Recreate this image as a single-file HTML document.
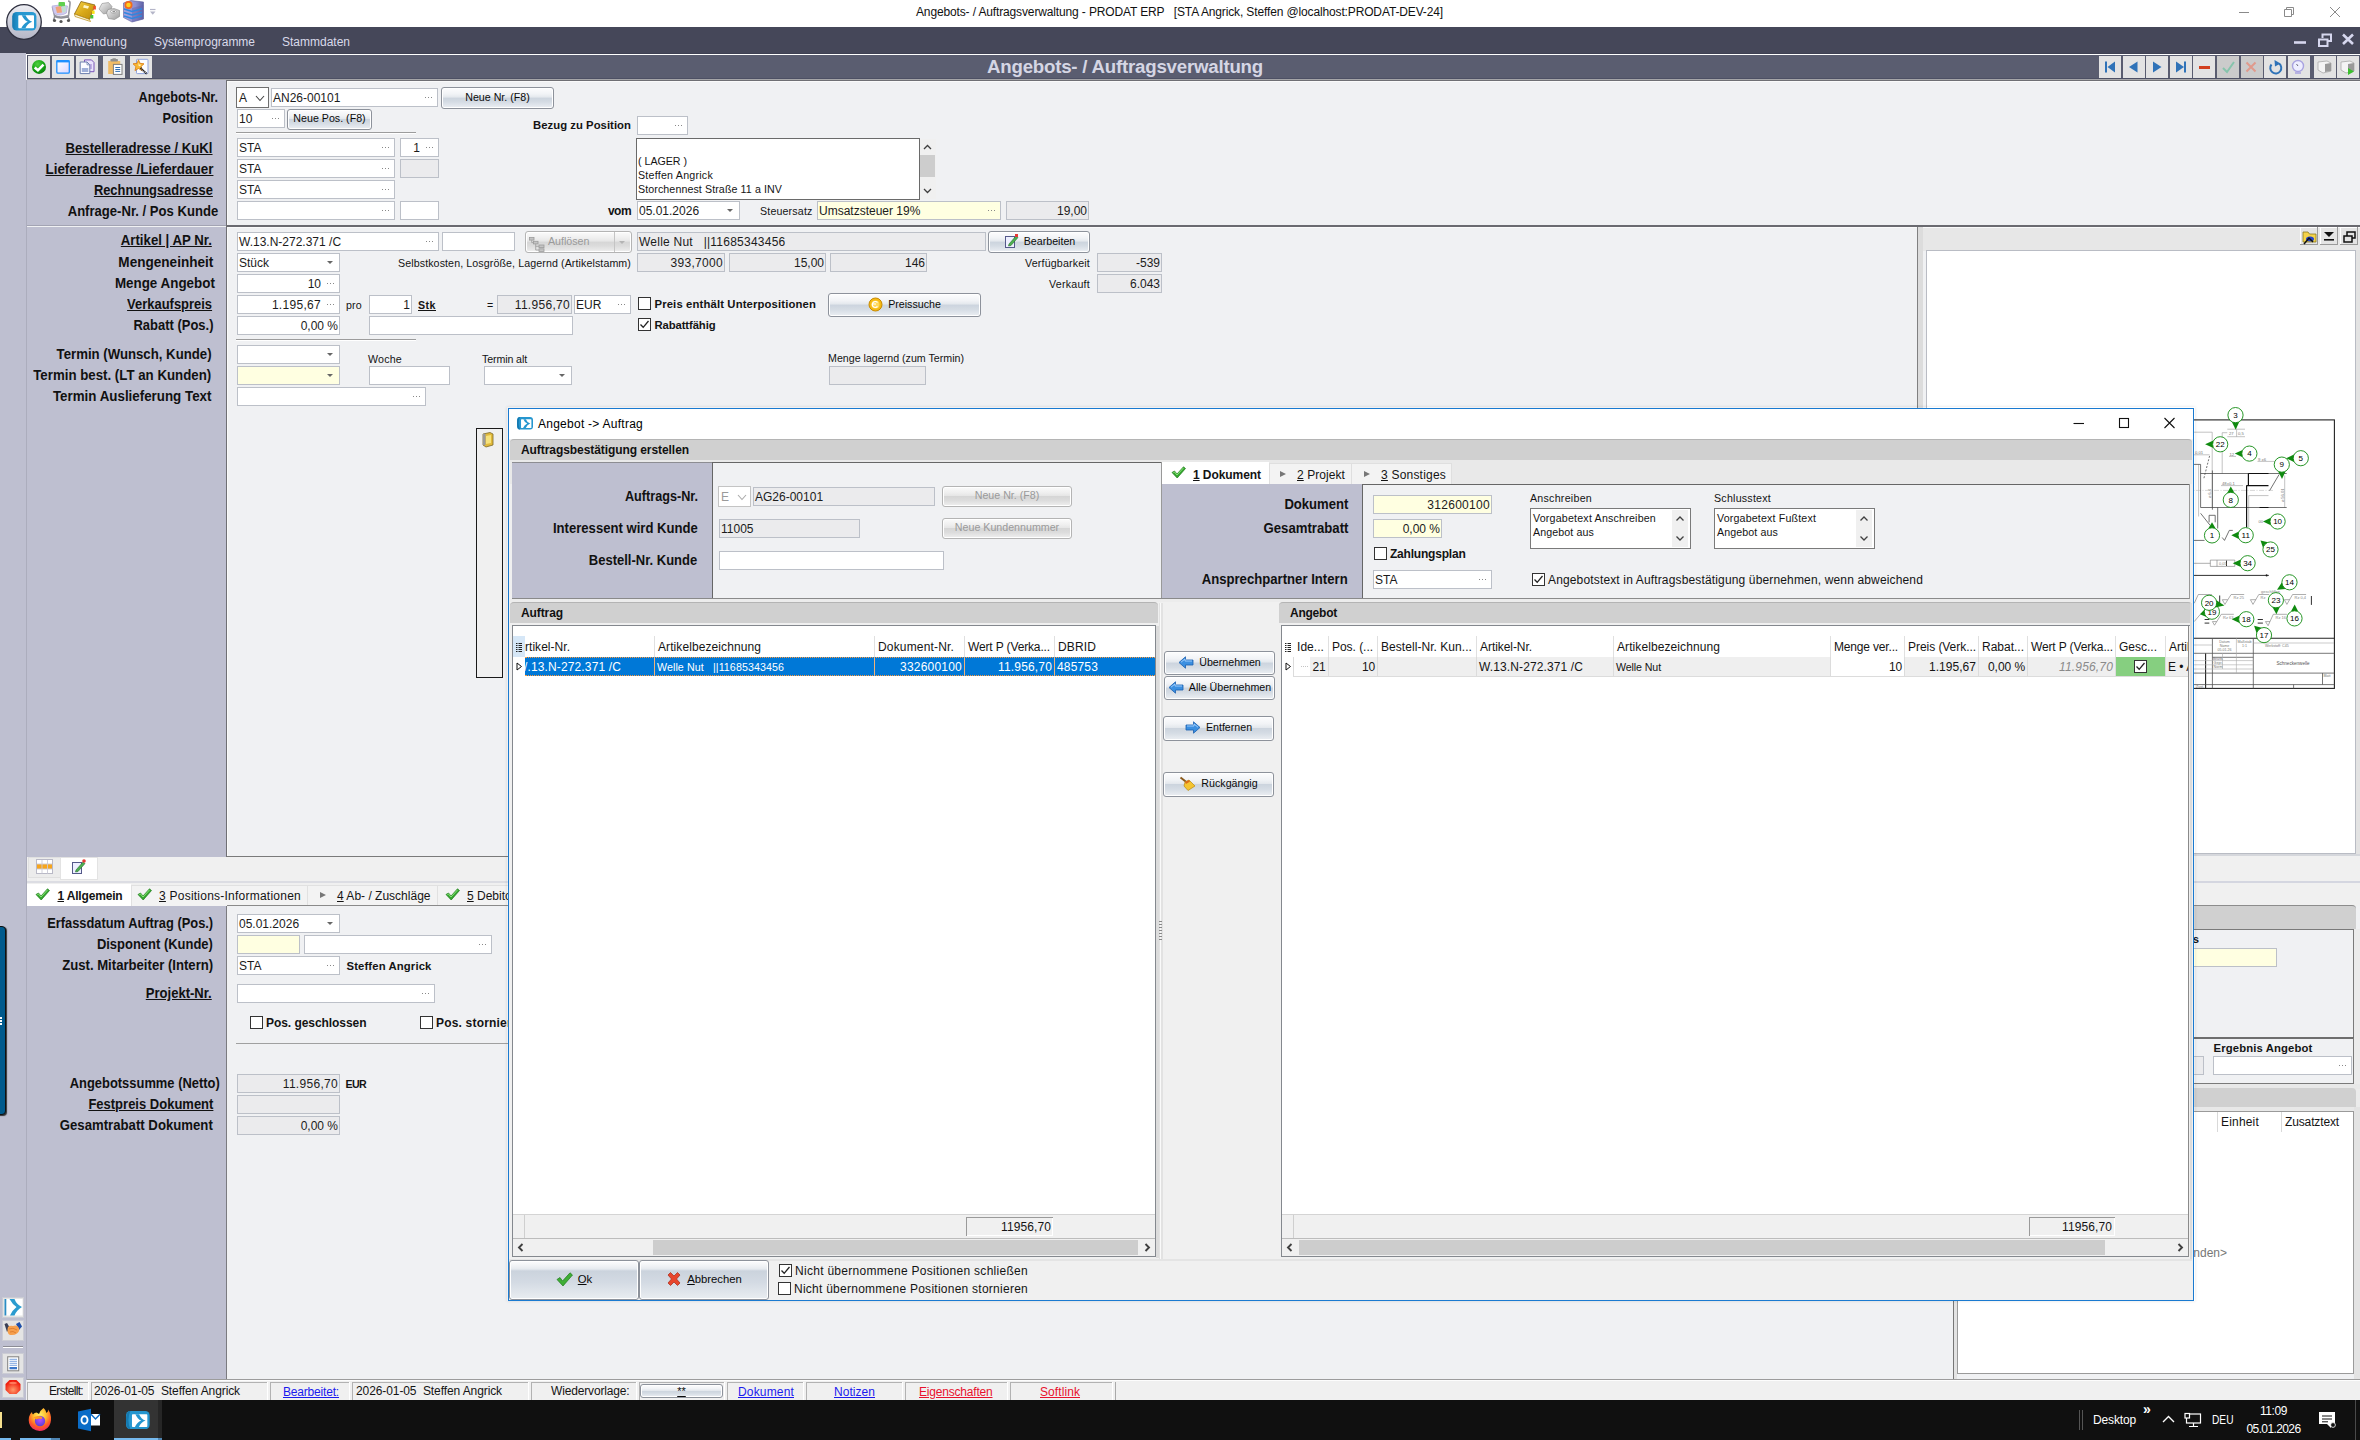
<!DOCTYPE html>
<html lang="de"><head><meta charset="utf-8"><title>Angebots- / Auftragsverwaltung - PRODAT ERP</title>
<style>
*{box-sizing:content-box;margin:0;padding:0}
html,body{width:2360px;height:1440px;overflow:hidden;background:#f0f1f3;font-family:"Liberation Sans",sans-serif;font-size:12px;color:#141414}
.a{position:absolute;white-space:pre}
.t{display:block}
.f{overflow:hidden;color:#1b1b1b}
.d{position:absolute;width:8px;height:1px;background:repeating-linear-gradient(90deg,#888 0 1px,transparent 1px 3px)}
.ar{position:absolute;width:0;height:0;border-left:3.5px solid transparent;border-right:3.5px solid transparent;border-top:3.5px solid #666}
.b{border:1px solid #8d929b;border-radius:3px;text-align:center;color:#0a0a0a;background:linear-gradient(#fdfdfe 0%,#f1f3f6 30%,#e4e8ed 46%,#ccd4de 50%,#d5dce4 70%,#eceff3 100%);box-shadow:inset 0 0 0 1px #fff}
.b.bd{color:#9a9a9a;background:linear-gradient(#fbfbfb 0%,#efefef 30%,#e6e6e6 46%,#d6d6d6 50%,#dcdcdc 70%,#efefef 100%);border-color:#b4b4b4}
.b.bg{background:linear-gradient(#fdfdfe 0,#f0f2f5 5px,#e6eaef 8px,#cbd3dd 10px,#d3dae3 55%,#e9edf1 100%)}
.b svg{vertical-align:middle;margin-right:5px;position:relative;top:-1px}
.tb{position:absolute;background:#e4e4e4}
u{text-decoration:underline}
</style></head>
<body>
<div class="a" style="left:0px;top:0px;width:2360px;height:27px;background:#fff;"></div>
<div class="a" style="left:0px;top:27px;width:2360px;height:27px;background:#454759;"></div>
<div class="a" style="left:0px;top:53px;width:2360px;height:1px;background:#3f4153;"></div>
<div class="a" style="left:0px;top:53px;width:26px;height:1347px;background:#bebfd0;"></div>
<div class="a" style="left:26px;top:80px;width:1px;height:1300px;background:#acadbd;"></div>
<div class="a" style="left:26px;top:54px;width:2334px;height:1px;background:#fff;"></div>
<div class="a" style="left:26px;top:54px;width:1px;height:25px;background:#fff;"></div>
<div class="a" style="left:27px;top:55px;width:2333px;height:24px;background:#5a5d70;"></div>
<div class="a" style="left:27px;top:55px;width:1px;height:24px;background:#4d5064;"></div>
<div class="a" style="left:27px;top:78px;width:2333px;height:1px;background:#4d5064;"></div>
<div class="a" style="left:27px;top:79px;width:2333px;height:1px;background:#a5a5a8;"></div>
<span class="a t" id="t1" style="top:4px;line-height:16px;font-size:12px;left:1179.5px;transform:translateX(-50%);color:#111;letter-spacing:-0.137px;">Angebots- / Auftragsverwaltung - PRODAT ERP   [STA Angrick, Steffen @localhost:PRODAT-DEV-24]</span>
<svg class="a" style="left:2230px;top:0" width="130" height="27" viewBox="0 0 130 27" fill="none" stroke="#8a8a8a" stroke-width="1"><path d="M9 12.5 H19"/><path d="M54.5 9.5 h7 v7 h-7 z"/><path d="M56.5 9.5 v-2 h7 v7 h-2"/><path d="M100 7 L110 17 M110 7 L100 17"/></svg>
<svg class="a" style="left:4px;top:2px" width="42" height="42" viewBox="4 2 42 42"><defs><linearGradient id="og" x1="0" y1="0" x2="0" y2="1"><stop offset="0" stop-color="#eeeff4"/><stop offset="0.5" stop-color="#cfd0dc"/><stop offset="1" stop-color="#b4b6c6"/></linearGradient><linearGradient id="ib" x1="0" y1="0" x2="1" y2="0"><stop offset="0" stop-color="#1579b0"/><stop offset="0.25" stop-color="#2596cf"/><stop offset="1" stop-color="#2a9bd3"/></linearGradient></defs><circle cx="24" cy="22" r="17.300" fill="url(#og)" stroke="#2f3140" stroke-width="1.300"/><rect x="12.200" y="12" width="24.200" height="18.500" rx="4.500" fill="url(#ib)"/><rect x="18.300" y="15.200" width="15.700" height="13" rx="0.800" fill="#fff"/><path d="M21.800 15.200 H25.600 Q27.500 20 32.200 21.700 Q27.500 23.400 25.400 28.200 H21.300 Q23.600 23.400 27.700 21.700 Q23.800 20 21.800 15.200 Z" fill="#2596cf"/></svg>
<svg class="a" style="left:50px;top:0" width="110" height="26" viewBox="50 0 110 26"><defs><linearGradient id="gd" x1="0" y1="0" x2="1" y2="1"><stop offset="0" stop-color="#f5d34a"/><stop offset="0.5" stop-color="#d9a91a"/><stop offset="1" stop-color="#b98a0c"/></linearGradient><linearGradient id="nt" x1="0" y1="0" x2="1" y2="1"><stop offset="0" stop-color="#f2f2f2"/><stop offset="1" stop-color="#9c9c9c"/></linearGradient><linearGradient id="sv" x1="0" y1="0" x2="1" y2="0"><stop offset="0" stop-color="#a9a4dc"/><stop offset="0.6" stop-color="#8d8fd0"/><stop offset="1" stop-color="#5f62a6"/></linearGradient></defs><path d="M68 1 Q70.500 1 70 4 L68.500 15.500 Q60 18.500 54.500 15.500 L52.500 7" fill="none" stroke="#9a9aa2" stroke-width="1.700"/><path d="M52 6 Q60 4 67.500 6 L66.500 13 Q60 17 54 13.500 Z" fill="#cfc9ef" stroke="#a9a3d6" stroke-width="0.600"/><rect x="58.500" y="2" width="6.500" height="4.500" rx="1" fill="#5fd04f"/><path d="M55.500 7 L61 6 L62 12.500 L57 13 Z" fill="#f0a27a"/><path d="M62 6.500 L66 6 L65.500 12 L62.500 12.500 Z" fill="#bfe0cf"/><path d="M54 16 Q60 19.500 69 16.500 M55 16 L53.500 20 M68 16.500 L69.500 20" stroke="#8e8e96" stroke-width="1.500" fill="none"/><circle cx="54.500" cy="20.500" r="1.600" fill="#555"/><circle cx="61" cy="21.500" r="1.600" fill="#555"/><circle cx="68.500" cy="20.500" r="1.600" fill="#555"/><path d="M74.500 14 L81 1.500 L95 5 L89.500 19.500 Z" fill="url(#gd)" stroke="#8a6510" stroke-width="0.800"/><path d="M74.500 14 L89.500 19.500 L90.500 21.500 L75 16.500 Z" fill="#fbf6e0" stroke="#b98a0c" stroke-width="0.700"/><path d="M84 5 L89 6.200 L88 8.700 L83 7.500 Z" fill="#fff6c8"/><rect x="93.300" y="6" width="2.600" height="3.500" fill="#f0522c"/><rect x="92" y="10.600" width="2.600" height="3.300" fill="#f7e017"/><rect x="90.500" y="15" width="2.800" height="3.500" fill="#44c436"/><path d="M99 9 L102 3.500 L108.500 2.500 L112 6.500 L110 12.500 L103.500 14 Z" fill="url(#nt)" stroke="#8c8c8c" stroke-width="0.600"/><path d="M106.500 13 L108 9.500 L114 8.500 L119.500 10.500 L119.500 16.500 L114.500 19.500 L108.500 18.500 Z" fill="url(#nt)" stroke="#858585" stroke-width="0.600"/><ellipse cx="113.500" cy="11.500" rx="3" ry="1.600" fill="#f6f6f6" stroke="#8a8a8a" stroke-width="0.600"/><ellipse cx="113.800" cy="11.600" rx="1.500" ry="0.800" fill="#8f8f8f"/><path d="M123.500 3 L131 0.500 L143.500 2 L143.500 19 L132 22 L123.500 17.500 Z" fill="url(#sv)" stroke="#5a5c9c" stroke-width="0.600"/><path d="M132 8 L143.500 5 L143.500 19 L132 22 Z" fill="#5f62a6" opacity="0.450"/><path d="M124 9 L132 11.500 L142 8.800 M124 12.500 L132 15 L142 12.300 M124 16 L132 18.500 L142 15.800" stroke="#2f86e0" stroke-width="1.500" fill="none"/><circle cx="128.500" cy="5" r="4" fill="#f26a1f"/><circle cx="128.500" cy="5" r="2.300" fill="#ffd21f"/><path d="M150 9.500 H155.500" stroke="#b4b5c8" stroke-width="1.200"/><path d="M150 11.500 L155.500 11.500 L152.750 14.800 Z" fill="#b4b5c8"/></svg>
<span class="a t" id="t2" style="top:34px;line-height:16px;font-size:12px;left:62px;color:#d9daea;letter-spacing:0.179px;">Anwendung</span>
<span class="a t" id="t3" style="top:34px;line-height:16px;font-size:12px;left:154px;color:#d9daea;letter-spacing:-0.025px;">Systemprogramme</span>
<span class="a t" id="t4" style="top:34px;line-height:16px;font-size:12px;left:282px;color:#d9daea;letter-spacing:-0.005px;">Stammdaten</span>
<svg class="a" style="left:2290px;top:30px" width="70" height="22" viewBox="0 0 70 22" fill="none" stroke="#d6d7ee" stroke-width="2"><path d="M4 12.5 H16" stroke-width="2.6"/><path d="M29 9.5 h8.5 v6.5 h-8.5 z"/><path d="M32.5 8 V4.5 h8.500 v6.500 H38" /><path d="M53 4.5 L63 14 M63 4.5 L53 14" stroke-width="2.6"/></svg>
<div class="tb" style="left:28px;top:56px;width:22px;height:22px"></div>
<div class="tb" style="left:52px;top:56px;width:22px;height:22px"></div>
<div class="tb" style="left:76px;top:56px;width:22px;height:22px"></div>
<div class="tb" style="left:103px;top:56px;width:22px;height:22px"></div>
<div class="tb" style="left:130px;top:56px;width:22px;height:22px"></div>
<svg class="a" style="left:28px;top:56px" width="126" height="22" viewBox="0 0 126 22"><defs><radialGradient id="gc" cx="0.4" cy="0.3" r="0.8"><stop offset="0" stop-color="#4fd03f"/><stop offset="0.6" stop-color="#12a012"/><stop offset="1" stop-color="#0a7a0a"/></radialGradient><linearGradient id="wg" x1="0" y1="0" x2="1" y2="1"><stop offset="0" stop-color="#ffffff"/><stop offset="1" stop-color="#d9d6ff"/></linearGradient></defs><circle cx="11" cy="10.900" r="7" fill="url(#gc)"/><path d="M6.700 11.500 L9.900 14.300 L15.500 8.600" stroke="#fff" stroke-width="2.600" fill="none"/><rect x="28.800" y="4.600" width="12.500" height="12.600" rx="1.200" fill="url(#wg)" stroke="#1e90ff" stroke-width="1.300"/><path d="M28.500 5.300 H41.500" stroke="#1e90ff" stroke-width="2.200"/><path d="M56.500 3.900 H63.500 L66 6.500 V15.700 H56.500 Z" fill="#e9e2fb" stroke="#7b55b8" stroke-width="1"/><path d="M63 8 V13" stroke="#a98bd6" stroke-width="1.200"/><path d="M52.200 6 H59 L61.800 8.800 V17.600 H52.200 Z" fill="#fbfcff" stroke="#6c7fae" stroke-width="1"/><path d="M59 6 V8.800 H61.800" fill="none" stroke="#6c7fae" stroke-width="0.800"/><rect x="53.800" y="12" width="6.500" height="4" fill="#9fb0d8"/><rect x="80.200" y="5" width="12" height="13" fill="#f0bc66"/><rect x="82.400" y="3" width="7.500" height="2.600" rx="0.800" fill="#8e8e8e"/><rect x="84.500" y="2.300" width="3.300" height="1.500" fill="#8e8e8e"/><rect x="85.400" y="8.400" width="8.600" height="10" fill="#fff" stroke="#7d7d7d" stroke-width="1"/><path d="M87.300 11.500 H92.200 M87.300 13.500 H92.200 M87.300 15.400 H92.200" stroke="#2f6fb5" stroke-width="1"/><rect x="108.500" y="3.300" width="11.500" height="14.300" rx="0.800" fill="#fbfcff" stroke="#8fa3dc" stroke-width="1"/><path d="M110.500 3.800 L112 7.300 L116 7.800 L113.100 10.500 L114 14.600 L110.500 12.500 L107 14.600 L107.900 10.500 L105 7.800 L109 7.300 Z" fill="#f7b733" stroke="#d97a12" stroke-width="0.800"/><path d="M110.500 6.500 L111.300 8.500 L113.300 8.800 L111.800 10.200 L110.500 9.800 Z" fill="#fff3c2"/><path d="M112.500 12 L118.800 17.900" stroke="#222" stroke-width="2" stroke-dasharray="1.200 0.500"/></svg>
<span class="a t" id="t5" style="top:54.5px;line-height:24px;font-size:18.67px;left:1125px;transform:translateX(-50%);font-weight:bold;color:#d5d6e4;letter-spacing:-0.209px;">Angebots- / Auftragsverwaltung</span>
<div class="tb" style="left:2099px;top:56px;width:22px;height:22px;background:#e3e3e3"></div>
<div class="tb" style="left:2123px;top:56px;width:22px;height:22px;background:#e3e3e3"></div>
<div class="tb" style="left:2146px;top:56px;width:22px;height:22px;background:#e3e3e3"></div>
<div class="tb" style="left:2170px;top:56px;width:22px;height:22px;background:#e3e3e3"></div>
<div class="tb" style="left:2193px;top:56px;width:22px;height:22px;background:#e3e3e3"></div>
<div class="tb" style="left:2217px;top:56px;width:22px;height:22px;background:#cbcbcb"></div>
<div class="tb" style="left:2241px;top:56px;width:22px;height:22px;background:#cbcbcb"></div>
<div class="tb" style="left:2264px;top:56px;width:22px;height:22px;background:#e3e3e3"></div>
<div class="tb" style="left:2288px;top:56px;width:22px;height:22px;background:#e3e3e3"></div>
<div class="tb" style="left:2314px;top:56px;width:22px;height:22px;background:#e3e3e3"></div>
<div class="tb" style="left:2337px;top:56px;width:22px;height:22px;background:#e3e3e3"></div>
<svg class="a" style="left:2099px;top:56px" width="262" height="22" viewBox="0 0 262 22"><g fill="#2f73b8"><rect x="6" y="5.500" width="2" height="11"/><path d="M16 5.5 V16.5 L8.500 11 Z"/><path d="M38.500 5.500 V16.500 L30 11 Z"/><path d="M54 5.500 V16.500 L62.500 11 Z"/><path d="M77 5.500 V16.500 L85 11 Z"/><rect x="85" y="5.500" width="2" height="11"/></g><rect x="100" y="10" width="11" height="3" fill="#d2401f"/><path d="M124 12 L128 16 L135 6" fill="none" stroke="#86c4ac" stroke-width="2"/><path d="M147.500 6.500 L156.500 15.500 M156.500 6.500 L147.500 15.500" stroke="#e09a8c" stroke-width="2"/><path d="M180 7.500 A5.500 5.500 0 1 1 172.500 8.500" fill="none" stroke="#2f73b8" stroke-width="2"/><path d="M175.500 4 L181.500 7.500 L176 10.500 Z" fill="#2f73b8"/><circle cx="199" cy="10" r="5.500" fill="#eef" stroke="#a9a3e0" stroke-width="1.4"/><path d="M199 10 L197.500 8" stroke="#667" stroke-width="1"/><path d="M196 17 H202" stroke="#a9a3e0" stroke-width="1.500"/><path d="M219 6 L228 5 L232 7 L232 15 L224 17 L219 14 Z" fill="#f4f4f4" stroke="#aaa" stroke-width="0.8"/><path d="M226 8 L232 7 L232 15 L226 16 Z" fill="#9a9a9a"/><path d="M242 6 L251 5 L255 7 L255 15 L247 17 L242 14 Z" fill="#f4f4f4" stroke="#aaa" stroke-width="0.8"/><path d="M249 8 L255 7 L255 15 L249 16 Z" fill="#9a9a9a"/><path d="M249 12 L255 15.500 L249 19 Z" fill="#3bbf2d"/></svg>
<div class="a" style="left:27px;top:80px;width:200px;height:145px;background:#bebfd0;"></div>
<div class="a" style="left:227px;top:80px;width:2133px;height:145px;background:#f0f1f3;"></div>
<div class="a" style="left:226px;top:80px;width:1px;height:145px;background:#6f6f74;"></div>
<div class="a" style="left:227px;top:81px;width:1px;height:144px;background:#fafafa;"></div>
<div class="a" style="left:227px;top:80px;width:2133px;height:1px;background:#6f6f74;"></div>
<div class="a" style="left:228px;top:81px;width:2132px;height:1px;background:#fafafa;"></div>
<div class="a" style="left:27px;top:225px;width:200px;height:1px;background:#a3a4b3;"></div>
<div class="a" style="left:27px;top:227px;width:200px;height:630px;background:#bebfd0;"></div>
<div class="a" style="left:227px;top:227px;width:1690px;height:630px;background:#f0f1f3;"></div>
<div class="a" style="left:226px;top:225px;width:1px;height:632px;background:#6f6f74;"></div>
<div class="a" style="left:227px;top:227px;width:1px;height:629px;background:#fafafa;"></div>
<div class="a" style="left:227px;top:225px;width:2133px;height:2px;background:#6a6a70;"></div>
<div class="a" style="left:228px;top:227px;width:1689px;height:1px;background:#fafafa;"></div>
<div class="a" style="left:227px;top:856px;width:1690px;height:1px;background:#7a7a7a;"></div>
<span class="a t" id="t6" style="top:88px;line-height:18px;font-size:14.2px;right:2141.5px;font-weight:bold;color:#111;transform:scaleX(0.8925);transform-origin:right center;">Angebots-Nr.</span>
<span class="a t" id="t7" style="top:109px;line-height:18px;font-size:14.2px;right:2147.5px;font-weight:bold;color:#111;transform:scaleX(0.9023);transform-origin:right center;">Position</span>
<span class="a t" id="t8" style="top:139px;line-height:18px;font-size:14.2px;right:2147px;font-weight:bold;color:#111;text-decoration:underline;transform:scaleX(0.9274);transform-origin:right center;">Bestelleradresse / KuKl</span>
<span class="a t" id="t9" style="top:159.5px;line-height:18px;font-size:14.2px;right:2147px;font-weight:bold;color:#111;text-decoration:underline;transform:scaleX(0.9468);transform-origin:right center;">Lieferadresse /Lieferdauer</span>
<span class="a t" id="t10" style="top:180.5px;line-height:18px;font-size:14.2px;right:2147px;font-weight:bold;color:#111;text-decoration:underline;transform:scaleX(0.9092);transform-origin:right center;">Rechnungsadresse</span>
<span class="a t" id="t11" style="top:201.5px;line-height:18px;font-size:14.2px;right:2141.5px;font-weight:bold;color:#111;transform:scaleX(0.9223);transform-origin:right center;">Anfrage-Nr. / Pos Kunde</span>
<div class="a f" style="left:236px;top:87px;width:31px;height:19px;background:#fff;border:1px solid #6f6f6f;line-height:19px;font-size:12px;"><span class="a" style="left:2px;top:1px;">A</span></div>
<svg class="a" style="left:255px;top:94.500px" width="10" height="7" viewBox="0 0 10 7"><path d="M1 1 L5 5.500 L9 1" fill="none" stroke="#444" stroke-width="1.1"/></svg>
<div class="a f" style="left:271px;top:88px;width:165px;height:17px;background:#fff;border:1px solid #bcc0c8;line-height:17px;font-size:12px;"><span class="a" style="left:1px;top:1px;">AN26-00101</span><i class="d" style="right:4px;top:8px"></i></div>
<div class="a b" style="left:441px;top:87px;width:111px;height:20px;line-height:18px;font-size:10.67px;"><span>Neue Nr. (F8)</span></div>
<div class="a f" style="left:237px;top:109px;width:46px;height:17px;background:#fff;border:1px solid #bcc0c8;line-height:17px;font-size:12px;"><span class="a" style="left:1px;top:1px;">10</span><i class="d" style="right:4px;top:8px"></i></div>
<div class="a b" style="left:287px;top:109px;width:83px;height:19px;line-height:17px;font-size:10.67px;"><span>Neue Pos. (F8)</span></div>
<div class="a" style="left:236px;top:132px;width:180px;height:1px;background:#9c9c9c;"></div>
<div class="a" style="left:236px;top:133px;width:180px;height:1px;background:#fff;"></div>
<div class="a f" style="left:237px;top:138px;width:156px;height:17px;background:#fff;border:1px solid #bcc0c8;line-height:17px;font-size:12px;"><span class="a" style="left:1px;top:1px;">STA</span><i class="d" style="right:4px;top:8px"></i></div>
<div class="a f" style="left:400px;top:138px;width:37px;height:17px;background:#fff;border:1px solid #bcc0c8;line-height:17px;font-size:12px;"><span class="a" style="right:18px;top:1px;">1</span><i class="d" style="right:4px;top:8px"></i></div>
<div class="a f" style="left:237px;top:159px;width:156px;height:17px;background:#fff;border:1px solid #bcc0c8;line-height:17px;font-size:12px;"><span class="a" style="left:1px;top:1px;">STA</span><i class="d" style="right:4px;top:8px"></i></div>
<div class="a f" style="left:400px;top:159px;width:37px;height:17px;background:#ebebed;border:1px solid #bcc0c8;line-height:17px;font-size:12px;"></div>
<div class="a f" style="left:237px;top:180px;width:156px;height:17px;background:#fff;border:1px solid #bcc0c8;line-height:17px;font-size:12px;"><span class="a" style="left:1px;top:1px;">STA</span><i class="d" style="right:4px;top:8px"></i></div>
<div class="a f" style="left:237px;top:201px;width:156px;height:17px;background:#fff;border:1px solid #bcc0c8;line-height:17px;font-size:12px;"><i class="d" style="right:4px;top:8px"></i></div>
<div class="a f" style="left:400px;top:201px;width:37px;height:17px;background:#fff;border:1px solid #bcc0c8;line-height:17px;font-size:12px;"></div>
<span class="a t" id="t12" style="top:117px;line-height:16px;font-size:11.3px;right:1729px;font-weight:bold;letter-spacing:0.042px;">Bezug zu Position</span>
<div class="a f" style="left:637px;top:116px;width:49px;height:17px;background:#fff;border:1px solid #bcc0c8;line-height:17px;font-size:12px;"><i class="d" style="right:4px;top:8px"></i></div>
<div class="a" style="left:636px;top:138px;width:282px;height:60px;background:#fff;border:1px solid #6a6a6a;"></div>
<span class="a t" id="t13" style="top:153px;line-height:16px;font-size:10.67px;left:638px;letter-spacing:-0.017px;">( LAGER )</span>
<span class="a t" id="t14" style="top:167px;line-height:16px;font-size:10.67px;left:638px;letter-spacing:0.234px;">Steffen Angrick</span>
<span class="a t" id="t15" style="top:181px;line-height:16px;font-size:10.67px;left:638px;letter-spacing:0.094px;">Storchennest Straße 11 a INV</span>
<div class="a" style="left:920px;top:139px;width:16px;height:60px;background:#f0f0f0;"></div>
<div class="a" style="left:920px;top:155px;width:15px;height:22px;background:#cdcdcd;"></div>
<svg class="a" style="left:920px;top:139px" width="16" height="60" viewBox="0 0 16 60" fill="none" stroke="#404040" stroke-width="1.3"><path d="M4 10 L7.500 6.500 L11 10"/><path d="M4 50 L7.500 53.500 L11 50"/></svg>
<span class="a t" id="t16" style="top:203px;line-height:16px;font-size:12px;right:1729px;font-weight:bold;letter-spacing:-0.562px;">vom</span>
<div class="a f" style="left:637px;top:201px;width:101px;height:17px;background:#fff;border:1px solid #bcc0c8;line-height:17px;font-size:12px;"><span class="a" style="left:1px;top:1px;">05.01.2026</span><i class="ar" style="right:6px;top:7px"></i></div>
<span class="a t" id="t17" style="top:203px;line-height:16px;font-size:10.67px;left:760px;letter-spacing:0.155px;">Steuersatz</span>
<div class="a f" style="left:817px;top:201px;width:182px;height:17px;background:#ffffe1;border:1px solid #bcc0c8;line-height:17px;font-size:12px;"><span class="a" style="left:1px;top:1px;">Umsatzsteuer 19%</span><i class="d" style="right:4px;top:8px"></i></div>
<div class="a f" style="left:1006px;top:201px;width:81px;height:17px;background:#ebebed;border:1px solid #bcc0c8;line-height:17px;font-size:12px;"><span class="a" style="right:1px;top:1px;">19,00</span></div>
<span class="a t" id="t18" style="top:231px;line-height:18px;font-size:14.2px;right:2148px;font-weight:bold;color:#111;text-decoration:underline;transform:scaleX(0.9304);transform-origin:right center;">Artikel | AP Nr.</span>
<span class="a t" id="t19" style="top:253px;line-height:18px;font-size:14.2px;right:2147px;font-weight:bold;color:#111;transform:scaleX(0.9564);transform-origin:right center;">Mengeneinheit</span>
<span class="a t" id="t20" style="top:274px;line-height:18px;font-size:14.2px;right:2145px;font-weight:bold;color:#111;transform:scaleX(0.9445);transform-origin:right center;">Menge Angebot</span>
<span class="a t" id="t21" style="top:294.5px;line-height:18px;font-size:14.2px;right:2148px;font-weight:bold;color:#111;text-decoration:underline;transform:scaleX(0.9132);transform-origin:right center;">Verkaufspreis</span>
<span class="a t" id="t22" style="top:316px;line-height:18px;font-size:14.2px;right:2147px;font-weight:bold;color:#111;transform:scaleX(0.9143);transform-origin:right center;">Rabatt (Pos.)</span>
<span class="a t" id="t23" style="top:345px;line-height:18px;font-size:14.2px;right:2148px;font-weight:bold;color:#111;transform:scaleX(0.9305);transform-origin:right center;">Termin (Wunsch, Kunde)</span>
<span class="a t" id="t24" style="top:366px;line-height:18px;font-size:14.2px;right:2149px;font-weight:bold;color:#111;transform:scaleX(0.9358);transform-origin:right center;">Termin best. (LT an Kunden)</span>
<span class="a t" id="t25" style="top:387px;line-height:18px;font-size:14.2px;right:2149px;font-weight:bold;color:#111;transform:scaleX(0.9410);transform-origin:right center;">Termin Auslieferung Text</span>
<div class="a f" style="left:237px;top:232px;width:200px;height:17px;background:#fff;border:1px solid #bcc0c8;line-height:17px;font-size:12px;"><span class="a" style="left:1px;top:1px;">W.13.N-272.371 /C</span><i class="d" style="right:4px;top:8px"></i></div>
<div class="a f" style="left:442px;top:232px;width:71px;height:17px;background:#fff;border:1px solid #bcc0c8;line-height:17px;font-size:12px;"></div>
<div class="a b bd" style="left:525px;top:231px;width:105px;height:20px;line-height:18px;font-size:10.67px;text-align:left"><svg class="a" style="left:3px;top:2px;margin:0" width="17" height="15" viewBox="0 0 17 15" fill="#c4c4c4" stroke="#9c9c9c" stroke-width="0.800"><rect x="0.500" y="0.500" width="4.500" height="2.600"/><rect x="4.500" y="4.300" width="4.500" height="2.600"/><rect x="10" y="8" width="5" height="2.600"/><rect x="10" y="11.800" width="5" height="2.600"/><path d="M2.700 3.100 V5.600 H4.500 M6.700 6.900 V13 H10 M6.700 9.300 H10" fill="none"/></svg><span class="a" style="left:22px;top:0">Auflösen</span><i class="a" style="left:88px;top:0;width:1px;height:20px;background:#c4c4c4"></i><i class="ar" style="left:93px;top:9px;border-top-color:#b4b4b4"></i></div>
<div class="a f" style="left:637px;top:232px;width:347px;height:17px;background:#ebebed;border:1px solid #bcc0c8;line-height:17px;font-size:12px;"><span class="a" id="t26" style="left:1px;top:1px;letter-spacing:0.237px;">Welle Nut   ||11685343456</span></div>
<div class="a b" style="left:988px;top:231px;width:100px;height:20px;line-height:18px;font-size:10.67px;"><svg width="16" height="16" viewBox="0 0 16 16"><rect x="2.500" y="3.500" width="9" height="11" fill="#eef0ff" stroke="#55598a"/><path d="M6 11 L13 3 L15 4.500 L8 12.500 L5.500 13 Z" fill="#4caf50" stroke="#2c6e2f" stroke-width="0.6"/><rect x="12" y="1" width="3" height="3" fill="#e53935"/></svg><span>Bearbeiten</span></div>
<div class="a f" style="left:237px;top:253px;width:101px;height:17px;background:#fff;border:1px solid #bcc0c8;line-height:17px;font-size:12px;"><span class="a" style="left:1px;top:1px;">Stück</span><i class="ar" style="right:6px;top:7px"></i></div>
<span class="a t" id="t27" style="top:255px;line-height:16px;font-size:10.67px;right:1729px;letter-spacing:0.095px;">Selbstkosten, Losgröße, Lagernd (Artikelstamm)</span>
<div class="a f" style="left:637px;top:253px;width:86px;height:17px;background:#ebebed;border:1px solid #bcc0c8;line-height:17px;font-size:12px;"><span class="a" style="right:1px;top:1px;letter-spacing:0.300px;">393,7000</span></div>
<div class="a f" style="left:729px;top:253px;width:95px;height:17px;background:#ebebed;border:1px solid #bcc0c8;line-height:17px;font-size:12px;"><span class="a" style="right:1px;top:1px;">15,00</span></div>
<div class="a f" style="left:830px;top:253px;width:95px;height:17px;background:#ebebed;border:1px solid #bcc0c8;line-height:17px;font-size:12px;"><span class="a" style="right:1px;top:1px;">146</span></div>
<span class="a t" id="t28" style="top:255px;line-height:16px;font-size:10.67px;right:1270px;letter-spacing:0.169px;">Verfügbarkeit</span>
<div class="a f" style="left:1097px;top:253px;width:63px;height:17px;background:#ebebed;border:1px solid #bcc0c8;line-height:17px;font-size:12px;"><span class="a" style="right:1px;top:1px;">-539</span></div>
<span class="a t" id="t29" style="top:276px;line-height:16px;font-size:10.67px;right:1270px;letter-spacing:0.236px;">Verkauft</span>
<div class="a f" style="left:1097px;top:274px;width:63px;height:17px;background:#ebebed;border:1px solid #bcc0c8;line-height:17px;font-size:12px;"><span class="a" style="right:1px;top:1px;">6.043</span></div>
<div class="a f" style="left:237px;top:274px;width:101px;height:17px;background:#fff;border:1px solid #bcc0c8;line-height:17px;font-size:12px;"><span class="a" style="right:18px;top:1px;">10</span><i class="d" style="right:4px;top:8px"></i></div>
<div class="a f" style="left:237px;top:295px;width:101px;height:17px;background:#fff;border:1px solid #bcc0c8;line-height:17px;font-size:12px;"><span class="a" style="right:18px;top:1px;letter-spacing:0.300px;">1.195,67</span><i class="d" style="right:4px;top:8px"></i></div>
<span class="a t" id="t30" style="top:297px;line-height:16px;font-size:10.67px;left:346px;letter-spacing:0.198px;">pro</span>
<div class="a f" style="left:369px;top:295px;width:41px;height:17px;background:#fff;border:1px solid #bcc0c8;line-height:17px;font-size:12px;"><span class="a" style="right:1px;top:1px;">1</span></div>
<span class="a t" id="t31" style="top:297px;line-height:16px;font-size:10.67px;left:418px;font-weight:bold;text-decoration:underline;letter-spacing:0.469px;">Stk</span>
<span class="a t" id="t32" style="top:297px;line-height:16px;font-size:10.67px;left:487px;">=</span>
<div class="a f" style="left:497px;top:295px;width:73px;height:17px;background:#ebebed;border:1px solid #bcc0c8;line-height:17px;font-size:12px;"><span class="a" style="right:1px;top:1px;letter-spacing:0.300px;">11.956,70</span></div>
<div class="a f" style="left:574px;top:295px;width:55px;height:17px;background:#fff;border:1px solid #bcc0c8;line-height:17px;font-size:12px;"><span class="a" style="left:1px;top:1px;">EUR</span><i class="d" style="right:4px;top:8px"></i></div>
<div class="a" style="left:638px;top:297px;width:11px;height:11px;background:#fff;border:1px solid #333;"></div>
<span class="a t" id="t33" style="top:296px;line-height:16px;font-size:11.3px;left:654.5px;font-weight:bold;letter-spacing:0.136px;">Preis enthält Unterpositionen</span>
<div class="a b" style="left:828px;top:293px;width:151px;height:22px;line-height:20px;font-size:10.67px;"><svg width="15" height="15" viewBox="0 0 15 15"><circle cx="7.500" cy="7.500" r="6.500" fill="#f6b911" stroke="#c88a00"/><circle cx="7.500" cy="7.500" r="4" fill="#ffd95a"/><path d="M9.500 5.500 A3 3 0 1 0 9.500 9.500 M4.500 7 H8" stroke="#fff" stroke-width="1.2" fill="none"/></svg><span>Preissuche</span></div>
<div class="a f" style="left:237px;top:316px;width:101px;height:17px;background:#fff;border:1px solid #bcc0c8;line-height:17px;font-size:12px;"><span class="a" style="right:1px;top:1px;">0,00 %</span></div>
<div class="a f" style="left:369px;top:316px;width:202px;height:17px;background:#fff;border:1px solid #bcc0c8;line-height:17px;font-size:12px;"></div>
<div class="a" style="left:638px;top:318px;width:11px;height:11px;background:#fff;border:1px solid #333;"><svg class="a" style="left:0;top:0" width="11" height="11" viewBox="0 0 11 11"><path d="M1.5 5.5 L4.2 8.3 L9.5 2" fill="none" stroke="#222" stroke-width="1.3"/></svg></div>
<span class="a t" id="t34" style="top:316.5px;line-height:16px;font-size:11.3px;left:654.5px;font-weight:bold;letter-spacing:-0.104px;">Rabattfähig</span>
<div class="a" style="left:236px;top:339px;width:180px;height:1px;background:#9c9c9c;"></div>
<div class="a" style="left:236px;top:340px;width:180px;height:1px;background:#fff;"></div>
<div class="a f" style="left:237px;top:345px;width:101px;height:17px;background:#fff;border:1px solid #bcc0c8;line-height:17px;font-size:12px;"><i class="ar" style="right:6px;top:7px"></i></div>
<div class="a f" style="left:237px;top:366px;width:101px;height:17px;background:#ffffe1;border:1px solid #bcc0c8;line-height:17px;font-size:12px;"><i class="ar" style="right:6px;top:7px"></i></div>
<span class="a t" id="t35" style="top:351px;line-height:16px;font-size:10.67px;left:368px;letter-spacing:0.203px;">Woche</span>
<div class="a f" style="left:369px;top:366px;width:79px;height:17px;background:#fff;border:1px solid #bcc0c8;line-height:17px;font-size:12px;"></div>
<span class="a t" id="t36" style="top:351px;line-height:16px;font-size:10.67px;left:482px;letter-spacing:-0.120px;">Termin alt</span>
<div class="a f" style="left:484px;top:366px;width:86px;height:17px;background:#fff;border:1px solid #bcc0c8;line-height:17px;font-size:12px;"><i class="ar" style="right:6px;top:7px"></i></div>
<span class="a t" id="t37" style="top:350px;line-height:16px;font-size:10.67px;left:828px;letter-spacing:-0.001px;">Menge lagernd (zum Termin)</span>
<div class="a f" style="left:829px;top:366px;width:95px;height:17px;background:#ebebed;border:1px solid #bcc0c8;line-height:17px;font-size:12px;"></div>
<div class="a f" style="left:237px;top:387px;width:187px;height:17px;background:#fff;border:1px solid #bcc0c8;line-height:17px;font-size:12px;"><i class="d" style="right:4px;top:8px"></i></div>
<div class="a" style="left:476px;top:428px;width:25px;height:248px;background:#f0f0f0;border:1px solid #1a1a1a;"></div>
<svg class="a" style="left:481px;top:431px" width="14" height="18" viewBox="0 0 14 18"><path d="M2 3 L9 1.500 L12 3 L12 14 L5 16 L2 14 Z" fill="#e1b93a" stroke="#7b6a2a" stroke-width="0.8"/><path d="M5 5 L10 4 L10 12 L5 13 Z" fill="#f6e27a"/><rect x="2" y="3" width="2.500" height="11" fill="#9a9a9a"/></svg>
<div class="a" style="left:1917px;top:227px;width:1px;height:630px;background:#808080;"></div>
<div class="a" style="left:1918px;top:227px;width:5px;height:630px;background:#dcdcdc;"></div>
<div class="a" style="left:1923px;top:227px;width:437px;height:24px;background:#e7e7e7;"></div>
<div class="a" style="left:1923px;top:227px;width:437px;height:1px;background:#fafafa;"></div>
<div class="a" style="left:1926px;top:250px;width:428px;height:602px;background:#fff;border:1px solid #b9bcc4;"></div>
<div class="a" style="left:2356px;top:250px;width:4px;height:604px;background:#e3e3e3;"></div>
<div class="tb" style="left:2300px;top:227px;width:18px;height:18px;box-shadow:inset -1px -1px 0 #9a9a9a, inset 1px 1px 0 #fff"></div>
<div class="tb" style="left:2320px;top:227px;width:18px;height:18px;box-shadow:inset -1px -1px 0 #9a9a9a, inset 1px 1px 0 #fff"></div>
<div class="tb" style="left:2340px;top:227px;width:18px;height:18px;box-shadow:inset -1px -1px 0 #9a9a9a, inset 1px 1px 0 #fff"></div>
<svg class="a" style="left:2300px;top:227px" width="60" height="19" viewBox="0 0 60 19"><path d="M3 5 H8 L9.500 7 H16 V15 H3 Z" fill="#f4d24a" stroke="#8a7a20" stroke-width="0.8"/><ellipse cx="10" cy="12" rx="4" ry="2.500" fill="#2244cc"/><path d="M4 17 L9 11 L13 15" stroke="#111" stroke-width="1.500" fill="none"/><path d="M24 5 H34 L29 10 Z" fill="#111"/><rect x="24" y="12" width="10" height="1.600" fill="#111"/><g fill="none" stroke="#111" stroke-width="1.500"><rect x="44" y="9" width="8" height="6"/><path d="M47 9 V5 H55 V11 H52"/></g></svg>
<svg class="a" style="left:2150px;top:400px" width="200" height="300" viewBox="2150 400 200 300" font-family="Liberation Sans, sans-serif"><g fill="none" stroke="#222" stroke-width="1.100"><rect x="2160" y="419.900" width="174.400" height="268.500"/><path d="M2160 638.200 H2334.400"/><path d="M2205.600 653.300 V688.400"/></g><g fill="none" stroke="#555" stroke-width="0.800"><path d="M2212.400 638.200 V688.400 M2253.300 638.200 V688.400 M2160 653.300 H2334.400 M2212.400 657.300 H2253.300 M2160 673.100 H2334.400 M2160 684.600 H2334.400 M2322.500 673.100 V684.600 M2293.600 684.600 V688.400"/></g><g fill="none" stroke="#aaa" stroke-width="0.600"><path d="M2236.400 638.200 V673.100 M2222.500 653.300 V669 M2160 660.600 H2253.300 M2160 664.800 H2253.300 M2160 669 H2253.300 M2160 645 H2212.400 M2253.300 643 H2334"/></g><g font-size="3.600" fill="#777" text-anchor="middle"><text x="2293" y="664.500" font-size="4.600" fill="#555">Schneckenwelle</text><text x="2224.500" y="643">Datum</text><text x="2224.500" y="646.800">Name</text><text x="2224.500" y="650.600">05.01.26</text><text x="2244.500" y="643">Maßstab</text><text x="2244.500" y="646.800">1:1</text><text x="2265" y="647" text-anchor="start">Werkstoff: C45</text><text x="2218" y="660">Bearb.</text><text x="2218" y="664.200">Gepr.</text><text x="2218" y="668.400">Norm</text><text x="2327" y="677">Blatt</text><text x="2200" y="688">Zust.</text></g><g fill="none" stroke="#9a9a9a" stroke-width="0.600"><path d="M2160 432.200 H2212.200 V507 M2222.200 432.700 V473.500 M2222.200 432.700 H2227.300 M2227.300 429.200 H2245 M2227.300 436.700 H2245 M2236.600 429.200 V436.700 M2160 454.800 H2209.600 M2229 456.400 H2236 M2257.500 461.400 H2279 M2198.600 464.400 V516.500 M2221 485.600 H2243 M2248.700 495.600 V527 M2248.700 495.600 H2268.500 M2284.700 475.500 V507.500"/><path d="M2160 490.400 H2273.500" stroke-dasharray="5 1.500 1 1.500" stroke="#bbb"/></g><g fill="none" stroke="#444" stroke-width="0.750"><path d="M2200.600 473.500 H2286.700 M2200.600 507.500 H2286.700 M2160 464.400 H2200.600 V507.500 M2212.400 470.500 V509.700 M2217.700 507.500 V528.500 M2209.100 522.300 V515.300 H2215.200 V522.300 M2200.600 513.300 L2210.100 525.300 M2279.100 474.500 L2269.600 490.600 M2160 540.400 H2204.500 M2222.200 537.500 L2224.500 540.400 L2229.300 530.400 H2232.800"/><path d="M2209.600 455.900 L2203.600 479.500" stroke-dasharray="2 1.500"/></g><g fill="none" stroke="#111" stroke-width="1.200"><path d="M2248.400 473.500 H2268.500 M2259.500 507.500 H2268.500 M2248.400 473.500 V485.600 M2246.400 485.600 H2268.500 M2246.600 485.600 V527.400"/></g><g font-size="4.200" fill="#777"><text x="2229" y="435">27</text><text x="2238" y="435">0,5</text><text x="2195" y="454">0,01</text><text x="2229.500" y="456">12</text><text x="2258" y="460.500">9 ±6</text><text x="2222" y="484.800">48±0,1</text><text x="2258.500" y="523">00</text><text x="2211" y="498" transform="rotate(-90 2211 498)">⌀ 6,4</text><text x="2284" y="502" transform="rotate(-90 2284 502)">⌀ 56,01</text></g><g fill="none" stroke="#1a1a1a" stroke-width="0.900"><path d="M2160 575.400 H2267 M2219.700 595.500 V605.400 M2311.400 596 V604.900 M2204.600 619.500 H2209.300 M2204.600 623.100 H2209.300 M2257.700 619.500 H2262.900 M2257.700 623.100 H2262.900 M2226.500 560.500 V566"/><path d="M2268.800 575.400 L2266 574.600 V576.200 Z" fill="#1a1a1a" stroke-width="0.500"/></g><g fill="none" stroke="#777" stroke-width="0.600"><path d="M2210.300 560.100 H2234.800 V566.400 H2210.300 Z M2217 560.100 V566.400 M2160 563.300 H2210.300" /><path d="M2194.200 603.300 L2198.300 594.500 H2211.900 M2222.300 599.700 L2224.900 604.400 L2231.100 594.500 H2244.200 M2250.400 599.700 L2253 604.400 L2258.800 594.500 H2269.200 M2284.300 599.700 L2286.900 604.400 L2292.600 594.500 H2306.100 M2222.300 599.700 H2227.600 M2250.400 599.700 H2255.800 M2284.300 599.700 H2289.600"/><path d="M2194.200 621.600 L2200.400 614.300 M2212.400 621.600 L2214.500 625.200 L2221.300 614.300 H2233.800 M2265.500 621.600 L2268.100 625.700 L2273.300 614.300 H2286.900 M2212.400 621.600 H2216.700 M2265.500 621.600 H2270"/></g><g font-size="4" fill="#888"><text x="2233.500" y="599">Rz 25</text><text x="2260.500" y="599">Rz</text><text x="2294.500" y="599">Rz 0,4</text><text x="2223" y="619">Rz 63</text><text x="2275.500" y="619">Rz 16</text><text x="2261" y="592.500">geschliffen</text><text x="2219" y="565">0,05</text></g><path d="M2235.7 429.7 L2231.9 422.0 L2239.3 421.8 Z" fill="#0f8a0f"/><circle cx="2235.5" cy="415.1" r="7.600" fill="#fff" stroke="#0f8a0f" stroke-width="0.900"/><text x="2235.5" y="417.90000000000003" font-size="8" text-anchor="middle" fill="#000" font-family="Liberation Sans, sans-serif">3</text><path d="M2205.1 444.3 L2213.4 440.6 L2213.4 448.0 Z" fill="#0f8a0f"/><circle cx="2220.2" cy="444.3" r="7.600" fill="#fff" stroke="#0f8a0f" stroke-width="0.900"/><text x="2220.2" y="447.1" font-size="8" text-anchor="middle" fill="#000" font-family="Liberation Sans, sans-serif">22</text><path d="M2234.8 453.6 L2242.6 449.9 L2242.6 457.3 Z" fill="#0f8a0f"/><circle cx="2249.4" cy="453.6" r="7.600" fill="#fff" stroke="#0f8a0f" stroke-width="0.900"/><text x="2249.4" y="456.40000000000003" font-size="8" text-anchor="middle" fill="#000" font-family="Liberation Sans, sans-serif">4</text><path d="M2286.2 458.2 L2294.0 454.5 L2294.0 461.9 Z" fill="#0f8a0f"/><circle cx="2300.8" cy="458.2" r="7.600" fill="#fff" stroke="#0f8a0f" stroke-width="0.900"/><text x="2300.8" y="461.0" font-size="8" text-anchor="middle" fill="#000" font-family="Liberation Sans, sans-serif">5</text><path d="M2282.0 479.0 L2278.2 471.5 L2285.6 471.3 Z" fill="#0f8a0f"/><circle cx="2281.8" cy="464.6" r="7.600" fill="#fff" stroke="#0f8a0f" stroke-width="0.900"/><text x="2281.8" y="467.40000000000003" font-size="8" text-anchor="middle" fill="#000" font-family="Liberation Sans, sans-serif">9</text><path d="M2230.8 486.6 L2234.5 493.1 L2227.1 493.1 Z" fill="#0f8a0f"/><circle cx="2230.8" cy="499.9" r="7.600" fill="#fff" stroke="#0f8a0f" stroke-width="0.900"/><text x="2230.8" y="502.7" font-size="8" text-anchor="middle" fill="#000" font-family="Liberation Sans, sans-serif">8</text><path d="M2263.0 521.5 L2270.8 517.8 L2270.8 525.2 Z" fill="#0f8a0f"/><circle cx="2277.6" cy="521.5" r="7.600" fill="#fff" stroke="#0f8a0f" stroke-width="0.900"/><text x="2277.6" y="524.3" font-size="8" text-anchor="middle" fill="#000" font-family="Liberation Sans, sans-serif">10</text><path d="M2212.0 522.3 L2215.7 528.6 L2208.3 528.6 Z" fill="#0f8a0f"/><circle cx="2212" cy="535.4" r="7.600" fill="#fff" stroke="#0f8a0f" stroke-width="0.900"/><text x="2212" y="538.1999999999999" font-size="8" text-anchor="middle" fill="#000" font-family="Liberation Sans, sans-serif">1</text><path d="M2231.3 535.2 L2238.9 531.5 L2238.9 538.9 Z" fill="#0f8a0f"/><circle cx="2245.7" cy="535.2" r="7.600" fill="#fff" stroke="#0f8a0f" stroke-width="0.900"/><text x="2245.7" y="538.0" font-size="8" text-anchor="middle" fill="#000" font-family="Liberation Sans, sans-serif">11</text><path d="M2260.5 540.4 L2268.0 542.2 L2263.0 547.7 Z" fill="#0f8a0f"/><circle cx="2270.5" cy="549.5" r="7.600" fill="#fff" stroke="#0f8a0f" stroke-width="0.900"/><text x="2270.5" y="552.3" font-size="8" text-anchor="middle" fill="#000" font-family="Liberation Sans, sans-serif">25</text><path d="M2232.7 563.2 L2240.8 559.5 L2240.8 566.9 Z" fill="#0f8a0f"/><circle cx="2247.6" cy="563.2" r="7.600" fill="#fff" stroke="#0f8a0f" stroke-width="0.900"/><text x="2247.6" y="566.0" font-size="8" text-anchor="middle" fill="#000" font-family="Liberation Sans, sans-serif">34</text><path d="M2277.0 589.8 L2281.8 582.6 L2285.6 589.0 Z" fill="#0f8a0f"/><circle cx="2289.5" cy="582.3" r="7.600" fill="#fff" stroke="#0f8a0f" stroke-width="0.900"/><text x="2289.5" y="585.0999999999999" font-size="8" text-anchor="middle" fill="#000" font-family="Liberation Sans, sans-serif">14</text><path d="M2199.9 614.3 L2204.5 609.5 L2206.0 616.8 Z" fill="#0f8a0f"/><circle cx="2211.9" cy="611.7" r="7.600" fill="#fff" stroke="#0f8a0f" stroke-width="0.900"/><text x="2211.9" y="614.5" font-size="8" text-anchor="middle" fill="#000" font-family="Liberation Sans, sans-serif">19</text><path d="M2224.4 605.5 L2215.2 607.6 L2216.4 600.3 Z" fill="#0f8a0f"/><circle cx="2209.1" cy="602.8" r="7.600" fill="#fff" stroke="#0f8a0f" stroke-width="0.900"/><text x="2209.1" y="605.5999999999999" font-size="8" text-anchor="middle" fill="#000" font-family="Liberation Sans, sans-serif">20</text><path d="M2276.4 614.3 L2272.4 607.1 L2279.8 606.9 Z" fill="#0f8a0f"/><circle cx="2275.9" cy="600.2" r="7.600" fill="#fff" stroke="#0f8a0f" stroke-width="0.900"/><text x="2275.9" y="603.0" font-size="8" text-anchor="middle" fill="#000" font-family="Liberation Sans, sans-serif">23</text><path d="M2294.7 604.4 L2298.3 611.7 L2290.9 611.5 Z" fill="#0f8a0f"/><circle cx="2294.5" cy="618.4" r="7.600" fill="#fff" stroke="#0f8a0f" stroke-width="0.900"/><text x="2294.5" y="621.1999999999999" font-size="8" text-anchor="middle" fill="#000" font-family="Liberation Sans, sans-serif">16</text><path d="M2231.7 619.2 L2239.5 615.5 L2239.5 622.9 Z" fill="#0f8a0f"/><circle cx="2246.3" cy="619.2" r="7.600" fill="#fff" stroke="#0f8a0f" stroke-width="0.900"/><text x="2246.3" y="622.0" font-size="8" text-anchor="middle" fill="#000" font-family="Liberation Sans, sans-serif">18</text><path d="M2254.1 625.7 L2261.6 627.7 L2256.5 633.1 Z" fill="#0f8a0f"/><circle cx="2264" cy="635.1" r="7.600" fill="#fff" stroke="#0f8a0f" stroke-width="0.900"/><text x="2264" y="637.9" font-size="8" text-anchor="middle" fill="#000" font-family="Liberation Sans, sans-serif">17</text></svg>
<div class="a" style="left:1923px;top:854px;width:437px;height:27px;background:#f0f0f0;"></div>
<div class="a" style="left:1923px;top:854px;width:437px;height:2px;background:#d5d7dc;"></div>
<div class="a" style="left:1923px;top:881px;width:437px;height:2px;background:#d4d6e0;"></div>
<div class="a" style="left:1923px;top:883px;width:437px;height:23px;background:#f0f0f0;"></div>
<div class="a" style="left:1923px;top:905px;width:433px;height:24px;background:#d0d0d0;border-radius:0 4px 0 0;border-top:1px solid #8c8c8c;height:23px;"></div>
<div class="a" style="left:1923px;top:929px;width:429px;height:108px;background:#f0f1f3;border:1px solid #7a7a7a;"></div>
<div class="a" style="left:2354px;top:929px;width:6px;height:180px;background:#ebebeb;"></div>
<span class="a t" id="t38" style="top:931px;line-height:16px;font-size:11.3px;left:2194px;font-weight:bold;left:auto;right:161px;">Status</span>
<div class="a f" style="left:2100px;top:948px;width:175px;height:17px;background:#ffffe1;border:1px solid #bcc0c8;line-height:17px;font-size:12px;"></div>
<div class="a" style="left:1923px;top:1037px;width:431px;height:2px;background:#6e6e6e;"></div>
<div class="a" style="left:1923px;top:1039px;width:431px;height:45px;background:#f0f1f3;"></div>
<div class="a" style="left:1923px;top:1083px;width:431px;height:1px;background:#7a7a7a;"></div>
<div class="a" style="left:2353px;top:1038px;width:1px;height:46px;background:#7a7a7a;"></div>
<span class="a t" id="t39" style="top:1040px;line-height:16px;font-size:11.3px;left:2213.5px;font-weight:bold;letter-spacing:0.133px;">Ergebnis Angebot</span>
<div class="a f" style="left:2100px;top:1056px;width:102px;height:17px;background:#ebebed;border:1px solid #bcc0c8;line-height:17px;font-size:12px;"></div>
<div class="a f" style="left:2213px;top:1056px;width:137px;height:17px;background:#fff;border:1px solid #bcc0c8;line-height:17px;font-size:12px;"><i class="d" style="right:4px;top:8px"></i></div>
<div class="a" style="left:1923px;top:1084px;width:437px;height:5px;background:#e8e8e8;"></div>
<div class="a" style="left:1923px;top:1088px;width:433px;height:19px;background:#d0d0d0;border-radius:0 4px 0 0;"></div>
<div class="a" style="left:1923px;top:1107px;width:437px;height:4px;background:#e8e8e8;"></div>
<div class="a" style="left:1957px;top:1111px;width:395px;height:261px;background:#fff;border:1px solid #9a9a9a;"></div>
<div class="a" style="left:1953px;top:1107px;width:4px;height:272px;background:#e3e3e3;"></div>
<div class="a" style="left:1953px;top:1107px;width:1px;height:272px;background:#777;"></div>
<div class="a" style="left:2354px;top:1107px;width:6px;height:272px;background:#e3e3e3;"></div>
<div class="a" style="left:2217px;top:1112px;width:1px;height:20px;background:#d9d9d9;"></div>
<div class="a" style="left:2281px;top:1112px;width:1px;height:20px;background:#d9d9d9;"></div>
<span class="a t" id="t40" style="top:1113.5px;line-height:16px;font-size:12px;left:2221px;letter-spacing:0.185px;">Einheit</span>
<span class="a t" id="t41" style="top:1113.5px;line-height:16px;font-size:12px;left:2285px;letter-spacing:-0.136px;">Zusatztext</span>
<span class="a t" id="t42" style="top:1244.5px;line-height:16px;font-size:12px;right:133px;color:#777;">&lt;Keine Daten vorhanden&gt;</span>
<div class="a" style="left:27px;top:857px;width:1890px;height:24px;background:#f0f0f0;"></div>
<div class="a" style="left:27px;top:881px;width:1890px;height:2px;background:#dcdde3;"></div>
<div class="a" style="left:27px;top:883px;width:1890px;height:23px;background:#f0f0f0;"></div>
<div class="a" style="left:28px;top:857px;width:31px;height:19px;background:#ececec;border:1px solid #e0e0e0"></div>
<div class="a" style="left:60px;top:857px;width:36px;height:21px;background:#fff;border:1px solid #e3e3e3"></div>
<svg class="a" style="left:36px;top:859px" width="18" height="16" viewBox="0 0 18 16"><rect x="0.500" y="0.500" width="16" height="14" fill="#fff" stroke="#b9b9c6"/><rect x="1" y="5" width="15" height="5" fill="#f7a51c"/><path d="M6 1 V14.500 M11.500 1 V14.500 M1 5 H16 M1 10 H16" stroke="#c9c9d6" stroke-width="0.900"/></svg>
<svg class="a" style="left:70px;top:858px" width="18" height="18" viewBox="0 0 18 18"><rect x="2.500" y="4.500" width="9" height="11" fill="#eef0ff" stroke="#55598a"/><path d="M6 12 L13 4 L15 5.500 L8 13.500 L5.500 14 Z" fill="#4caf50" stroke="#2c6e2f" stroke-width="0.600"/><circle cx="14" cy="3" r="1.800" fill="#e53935"/></svg>
<div class="a" style="left:27px;top:884px;width:104px;height:22px;background:#fff;"></div>
<div class="a" style="left:131px;top:885px;width:175px;height:20px;background:#f3f3f3;border:1px solid #e1e1e1;"></div>
<div class="a" style="left:307px;top:885px;width:129px;height:20px;background:#f3f3f3;border:1px solid #e1e1e1;"></div>
<div class="a" style="left:437px;top:885px;width:122px;height:20px;background:#f3f3f3;border:1px solid #e1e1e1;"></div>
<svg class="a" style="left:35px;top:888px" width="15" height="13" viewBox="0 0 15 13"><path d="M1 6.500 L3.500 5 L6 8 L12.500 0.800 L14.500 2.500 L6.200 12 Z" fill="#35a82f" stroke="#1f7a1c" stroke-width="0.7"/><path d="M2.300 6.500 L3.400 5.900 L6 9 L12.600 1.800" fill="none" stroke="#8be37a" stroke-width="1"/></svg>
<span class="a t" id="t43" style="top:887.5px;line-height:16px;font-size:12px;left:57.5px;font-weight:bold;letter-spacing:-0.175px;"><u>1</u> Allgemein</span>
<svg class="a" style="left:137px;top:888px" width="15" height="13" viewBox="0 0 15 13"><path d="M1 6.500 L3.500 5 L6 8 L12.500 0.800 L14.500 2.500 L6.200 12 Z" fill="#35a82f" stroke="#1f7a1c" stroke-width="0.7"/><path d="M2.300 6.500 L3.400 5.900 L6 9 L12.600 1.800" fill="none" stroke="#8be37a" stroke-width="1"/></svg>
<span class="a t" id="t44" style="top:887.5px;line-height:16px;font-size:12px;left:159px;letter-spacing:0.236px;"><u>3</u> Positions-Informationen</span>
<i class="a" style="left:320px;top:892px;width:0;height:0;border-top:3.500px solid transparent;border-bottom:3.500px solid transparent;border-left:6px solid #777"></i>
<span class="a t" id="t45" style="top:887.5px;line-height:16px;font-size:12px;left:337px;letter-spacing:0.006px;"><u>4</u> Ab- / Zuschläge</span>
<svg class="a" style="left:445px;top:888px" width="15" height="13" viewBox="0 0 15 13"><path d="M1 6.500 L3.500 5 L6 8 L12.500 0.800 L14.500 2.500 L6.200 12 Z" fill="#35a82f" stroke="#1f7a1c" stroke-width="0.7"/><path d="M2.300 6.500 L3.400 5.900 L6 9 L12.600 1.800" fill="none" stroke="#8be37a" stroke-width="1"/></svg>
<span class="a t" id="t46" style="top:887.5px;line-height:16px;font-size:12px;left:467px;"><u>5</u> Debitor</span>
<div class="a" style="left:27px;top:906px;width:200px;height:473px;background:#bebfd0;"></div>
<div class="a" style="left:227px;top:906px;width:1726px;height:473px;background:#f0f1f3;"></div>
<div class="a" style="left:226px;top:906px;width:1px;height:473px;background:#7b7b80;"></div>
<div class="a" style="left:227px;top:905px;width:1690px;height:1px;background:#8a8a8a;"></div>
<span class="a t" id="t47" style="top:914px;line-height:18px;font-size:14.2px;right:2147px;font-weight:bold;color:#111;transform:scaleX(0.9063);transform-origin:right center;">Erfassdatum Auftrag (Pos.)</span>
<span class="a t" id="t48" style="top:934.5px;line-height:18px;font-size:14.2px;right:2147px;font-weight:bold;color:#111;transform:scaleX(0.9142);transform-origin:right center;">Disponent (Kunde)</span>
<span class="a t" id="t49" style="top:956px;line-height:18px;font-size:14.2px;right:2147px;font-weight:bold;color:#111;transform:scaleX(0.9254);transform-origin:right center;">Zust. Mitarbeiter (Intern)</span>
<span class="a t" id="t50" style="top:984px;line-height:18px;font-size:14.2px;right:2148px;font-weight:bold;color:#111;text-decoration:underline;transform:scaleX(0.9199);transform-origin:right center;">Projekt-Nr.</span>
<span class="a t" id="t51" style="top:1074px;line-height:18px;font-size:14.2px;right:2140px;font-weight:bold;color:#111;transform:scaleX(0.9105);transform-origin:right center;">Angebotssumme (Netto)</span>
<span class="a t" id="t52" style="top:1095px;line-height:18px;font-size:14.2px;right:2147px;font-weight:bold;color:#111;text-decoration:underline;transform:scaleX(0.9165);transform-origin:right center;">Festpreis Dokument</span>
<span class="a t" id="t53" style="top:1116px;line-height:18px;font-size:14.2px;right:2147px;font-weight:bold;color:#111;transform:scaleX(0.9285);transform-origin:right center;">Gesamtrabatt Dokument</span>
<div class="a f" style="left:237px;top:914px;width:101px;height:17px;background:#fff;border:1px solid #bcc0c8;line-height:17px;font-size:12px;"><span class="a" style="left:1px;top:1px;">05.01.2026</span><i class="ar" style="right:6px;top:7px"></i></div>
<div class="a f" style="left:237px;top:935px;width:61px;height:17px;background:#ffffe1;border:1px solid #bcc0c8;line-height:17px;font-size:12px;"></div>
<div class="a f" style="left:304px;top:935px;width:186px;height:17px;background:#fff;border:1px solid #bcc0c8;line-height:17px;font-size:12px;"><i class="d" style="right:4px;top:8px"></i></div>
<div class="a f" style="left:237px;top:956px;width:101px;height:17px;background:#fff;border:1px solid #bcc0c8;line-height:17px;font-size:12px;"><span class="a" style="left:1px;top:1px;">STA</span><i class="d" style="right:4px;top:8px"></i></div>
<span class="a t" id="t54" style="top:958px;line-height:16px;font-size:11.3px;left:346.5px;font-weight:bold;letter-spacing:0.128px;">Steffen Angrick</span>
<div class="a f" style="left:237px;top:984px;width:196px;height:17px;background:#fff;border:1px solid #bcc0c8;line-height:17px;font-size:12px;"><i class="d" style="right:4px;top:8px"></i></div>
<div class="a" style="left:250px;top:1016px;width:11px;height:11px;background:#fff;border:1px solid #333;"></div>
<span class="a t" id="t55" style="top:1014.5px;line-height:16px;font-size:12px;left:266px;font-weight:bold;letter-spacing:-0.055px;">Pos. geschlossen</span>
<div class="a" style="left:420px;top:1016px;width:11px;height:11px;background:#fff;border:1px solid #333;"></div>
<span class="a t" id="t56" style="top:1014.5px;line-height:16px;font-size:12px;left:436px;font-weight:bold;letter-spacing:0.189px;">Pos. storniert</span>
<div class="a" style="left:236px;top:1043px;width:1681px;height:1px;background:#a0a0a0;"></div>
<div class="a f" style="left:237px;top:1074px;width:101px;height:17px;background:#ebebed;border:1px solid #bcc0c8;line-height:17px;font-size:12px;"><span class="a" style="right:1px;top:1px;letter-spacing:0.300px;">11.956,70</span></div>
<span class="a t" id="t57" style="top:1076px;line-height:16px;font-size:10.67px;left:345.5px;font-weight:bold;letter-spacing:-0.667px;">EUR</span>
<div class="a f" style="left:237px;top:1095px;width:101px;height:17px;background:#ebebed;border:1px solid #bcc0c8;line-height:17px;font-size:12px;"></div>
<div class="a f" style="left:237px;top:1116px;width:101px;height:17px;background:#ebebed;border:1px solid #bcc0c8;line-height:17px;font-size:12px;"><span class="a" style="right:1px;top:1px;">0,00 %</span></div>
<div class="a" style="left:-3px;top:926px;width:7px;height:187px;background:#005a8c;border:1px solid #111;border-radius:0 4px 4px 0;box-shadow:1px 1px 1px #333"></div>
<div class="a" style="left:0;top:1017px;width:2px;height:1.500px;background:#fff"></div><div class="a" style="left:0;top:1020px;width:2px;height:1.500px;background:#fff"></div><div class="a" style="left:0;top:1023px;width:2px;height:1.500px;background:#fff"></div>
<div class="a" style="left:2px;top:1297px;width:20px;height:19px;background:#e4e4e4;border:1px solid #cbccd4"></div>
<div class="a" style="left:2px;top:1320px;width:20px;height:19px;background:#e4e4e4;border:1px solid #cbccd4"></div>
<div class="a" style="left:2px;top:1353px;width:20px;height:19px;background:#e4e4e4;border:1px solid #cbccd4"></div>
<div class="a" style="left:2px;top:1377px;width:20px;height:19px;background:#e4e4e4;border:1px solid #cbccd4"></div>
<div class="a" style="left:3px;top:1346px;width:20px;height:1px;background:#8c8c94;"></div>
<div class="a" style="left:3px;top:1347px;width:20px;height:1px;background:#fff;"></div>
<svg class="a" style="left:2px;top:1297px" width="22" height="104" viewBox="0 0 22 104"><rect x="2.500" y="2" width="18" height="16.500" fill="#fff"/><path d="M2.500 2 H4.300 V18.500 H2.500 Z" fill="#2b8cc4"/><path d="M7.500 2 H12.500 Q14.500 7.500 20 10 Q14.500 13 12.500 18.500 H8 Q10.500 13 14.500 10 Q10.500 7.500 7.500 2 Z" fill="#2b9bcf"/><path d="M2.500 27 L5 26 L8 31 L5 35 Z" fill="#3a3f55"/><path d="M14 27 L17.500 25 L20 29.500 L17 33 Z" fill="#1e4fa8"/><path d="M6 30 Q8 28 11 29 Q15 27.500 17 31 Q18 34 15 36.500 Q11 39 7 37.500 Q4.500 35 6 30 Z" fill="#f6a04d"/><path d="M7 32 Q11 30 15 33 M8 35 Q11 33.500 14 36" stroke="#d9772a" stroke-width="0.800" fill="none"/><rect x="5.700" y="59.800" width="11" height="14" fill="#fff" stroke="#7f7f7f" stroke-width="1"/><path d="M7.500 62.300 H15 M7.500 64.300 H15 M7.500 66.300 H15 M7.500 68.300 H15" stroke="#5b8dd6" stroke-width="0.800"/><rect x="7.500" y="70" width="7.500" height="2.300" fill="#3d78c9"/><defs><radialGradient id="rg" cx="0.5" cy="0.700" r="0.600"><stop offset="0" stop-color="#ff9a6a"/><stop offset="1" stop-color="#f01c0c"/></radialGradient></defs><path d="M7.500 83 H14.500 L18.500 87 V93 L14.500 97 H7.500 L3.500 93 V87 Z" fill="url(#rg)"/><path d="M6.500 86 Q11 83.500 15.500 86 Q11 88.500 6.500 86 Z" fill="#ff7a5c"/></svg>
<div class="a" style="left:27px;top:1379px;width:2333px;height:21px;background:#f0f0f0;"></div>
<div class="a" style="left:27px;top:1379px;width:2333px;height:1px;background:#9c9c9c;"></div>
<div class="a" style="left:27px;top:1380px;width:2333px;height:1px;background:#fdfdfd;"></div>
<div class="a" style="left:27px;top:1382px;width:1px;height:18px;background:#b2b2b2;"></div>
<div class="a" style="left:27px;top:1382px;width:61px;height:1px;background:#b2b2b2;"></div>
<div class="a" style="left:88px;top:1382px;width:1px;height:18px;background:#fff;"></div>
<div class="a" style="left:91px;top:1382px;width:1px;height:18px;background:#b2b2b2;"></div>
<div class="a" style="left:91px;top:1382px;width:176px;height:1px;background:#b2b2b2;"></div>
<div class="a" style="left:267px;top:1382px;width:1px;height:18px;background:#fff;"></div>
<div class="a" style="left:270px;top:1382px;width:1px;height:18px;background:#b2b2b2;"></div>
<div class="a" style="left:270px;top:1382px;width:79px;height:1px;background:#b2b2b2;"></div>
<div class="a" style="left:349px;top:1382px;width:1px;height:18px;background:#fff;"></div>
<div class="a" style="left:352px;top:1382px;width:1px;height:18px;background:#b2b2b2;"></div>
<div class="a" style="left:352px;top:1382px;width:176px;height:1px;background:#b2b2b2;"></div>
<div class="a" style="left:528px;top:1382px;width:1px;height:18px;background:#fff;"></div>
<div class="a" style="left:531px;top:1382px;width:1px;height:18px;background:#b2b2b2;"></div>
<div class="a" style="left:531px;top:1382px;width:105px;height:1px;background:#b2b2b2;"></div>
<div class="a" style="left:636px;top:1382px;width:1px;height:18px;background:#fff;"></div>
<div class="a" style="left:639px;top:1382px;width:1px;height:18px;background:#b2b2b2;"></div>
<div class="a" style="left:639px;top:1382px;width:85px;height:1px;background:#b2b2b2;"></div>
<div class="a" style="left:724px;top:1382px;width:1px;height:18px;background:#fff;"></div>
<div class="a" style="left:727px;top:1382px;width:1px;height:18px;background:#b2b2b2;"></div>
<div class="a" style="left:727px;top:1382px;width:76px;height:1px;background:#b2b2b2;"></div>
<div class="a" style="left:803px;top:1382px;width:1px;height:18px;background:#fff;"></div>
<div class="a" style="left:806px;top:1382px;width:1px;height:18px;background:#b2b2b2;"></div>
<div class="a" style="left:806px;top:1382px;width:96px;height:1px;background:#b2b2b2;"></div>
<div class="a" style="left:902px;top:1382px;width:1px;height:18px;background:#fff;"></div>
<div class="a" style="left:905px;top:1382px;width:1px;height:18px;background:#b2b2b2;"></div>
<div class="a" style="left:905px;top:1382px;width:102px;height:1px;background:#b2b2b2;"></div>
<div class="a" style="left:1007px;top:1382px;width:1px;height:18px;background:#fff;"></div>
<div class="a" style="left:1010px;top:1382px;width:1px;height:18px;background:#b2b2b2;"></div>
<div class="a" style="left:1010px;top:1382px;width:102px;height:1px;background:#b2b2b2;"></div>
<div class="a" style="left:1112px;top:1382px;width:1px;height:18px;background:#fff;"></div>
<div class="a" style="left:1115px;top:1382px;width:1px;height:18px;background:#a9a9a9;"></div>
<span class="a t" id="t58" style="top:1383px;line-height:16px;font-size:12px;right:2277px;letter-spacing:-0.668px;">Erstellt:</span>
<span class="a t" id="t59" style="top:1383px;line-height:16px;font-size:12px;left:94px;letter-spacing:-0.094px;">2026-01-05  Steffen Angrick</span>
<span class="a t" id="t60" style="top:1383.5px;line-height:16px;font-size:12px;left:283px;color:#1a1aee;text-decoration:underline;letter-spacing:-0.186px;">Bearbeitet:</span>
<span class="a t" id="t61" style="top:1383px;line-height:16px;font-size:12px;left:356px;letter-spacing:-0.094px;">2026-01-05  Steffen Angrick</span>
<span class="a t" id="t62" style="top:1383px;line-height:16px;font-size:12px;left:551px;letter-spacing:-0.157px;">Wiedervorlage:</span>
<div class="a b" style="left:640px;top:1384px;width:81px;height:12px;line-height:12px;font-size:11px;border-radius:3px"><u>**</u></div>
<span class="a t" id="t63" style="top:1383.5px;line-height:16px;font-size:12px;left:738px;color:#1a1aee;text-decoration:underline;letter-spacing:0.162px;">Dokument</span>
<span class="a t" id="t64" style="top:1383.5px;line-height:16px;font-size:12px;left:834px;color:#1a1aee;text-decoration:underline;letter-spacing:0.045px;">Notizen</span>
<span class="a t" id="t65" style="top:1383.5px;line-height:16px;font-size:12px;left:919px;color:#e8112d;text-decoration:underline;letter-spacing:-0.197px;">Eigenschaften</span>
<span class="a t" id="t66" style="top:1383.5px;line-height:16px;font-size:12px;left:1040px;color:#e8112d;text-decoration:underline;letter-spacing:0.080px;">Softlink</span>
<div class="a" style="left:0px;top:1400px;width:2360px;height:40px;background:#101010;"></div>
<div class="a" style="left:114px;top:1400px;width:44px;height:40px;background:#333333;"></div>
<div class="a" style="left:158px;top:1400px;width:4px;height:40px;background:#262626;"></div>
<div class="a" style="left:0px;top:1438px;width:11px;height:2px;background:#76b9ed;"></div>
<div class="a" style="left:20px;top:1438px;width:31px;height:2px;background:#76b9ed;"></div>
<div class="a" style="left:51px;top:1438px;width:9px;height:2px;background:#4f86b4;"></div>
<div class="a" style="left:114px;top:1438px;width:44px;height:2px;background:#76b9ed;"></div>
<div class="a" style="left:158px;top:1438px;width:4px;height:2px;background:#4f86b4;"></div>
<div class="a" style="left:0px;top:1412px;width:1.5px;height:16px;background:#f5e08e;"></div>
<svg class="a" style="left:24px;top:1404px" width="90" height="32" viewBox="24 1404 90 32"><defs><radialGradient id="ff" cx="0.5" cy="0.300" r="0.800"><stop offset="0" stop-color="#fff36b"/><stop offset="0.350" stop-color="#ffbd2e"/><stop offset="0.650" stop-color="#ff5a26"/><stop offset="1" stop-color="#e31587"/></radialGradient><radialGradient id="fp" cx="0.5" cy="0.400" r="0.600"><stop offset="0" stop-color="#b84dff"/><stop offset="1" stop-color="#5a3fd6"/></radialGradient></defs><path d="M43.500 1408 Q46 1410 46.500 1413 Q48.500 1411.500 48 1409.500 Q51.500 1414 51 1420 Q50.500 1427 44.500 1430 Q38 1432.500 32.500 1428.500 Q27.500 1424 29 1417 Q30 1413.500 32 1412 Q32 1413.500 33 1414.500 Q34.500 1412.500 36.500 1412.500 Q38 1413 39 1414 Q40 1410.500 43.500 1408 Z" fill="url(#ff)"/><circle cx="40" cy="1421" r="5.200" fill="url(#fp)"/><path d="M33.500 1417.500 Q37 1415 41 1416.500 Q43 1417.500 41.500 1419 Q39 1418 36.500 1419.500 Z" fill="#ff9a1f"/><path d="M78 1411.500 L91 1408.700 V1431.200 L78 1428.500 Z" fill="#0a6cc7"/><rect x="91" y="1414" width="9" height="11.500" fill="#fff"/><path d="M91 1414.300 L95.500 1419 L100 1414.300" stroke="#0a6cc7" stroke-width="1.400" fill="none"/><ellipse cx="84.500" cy="1420" rx="3" ry="3.700" fill="none" stroke="#fff" stroke-width="1.900"/></svg>
<svg class="a" style="left:126.2px;top:1411px" width="23.7" height="18.3" viewBox="0 0 24.2 18.5" preserveAspectRatio="none"><rect x="0" y="0" width="24.2" height="18.5" rx="4.5" fill="#2596cf"/><path d="M4.5 0 H3 Q0 2 0 9.2 Q0 16.500 3 18.500 H4.500 Q2.500 14 2.500 9.200 Q2.500 4 4.500 0 Z" fill="#1579b0"/><rect x="6.1" y="3.2" width="15.7" height="13" rx="0.8" fill="#fff"/><path d="M9.6 3.2 H13.4 Q15.3 8 20 9.7 Q15.3 11.4 13.2 16.2 H9.1 Q11.4 11.4 15.5 9.7 Q11.6 8 9.6 3.2 Z" fill="#2596cf"/></svg>
<div class="a" style="left:2079px;top:1410px;width:1px;height:20px;background:#555;"></div>
<div class="a" style="left:2082px;top:1410px;width:1px;height:20px;background:#555;"></div>
<span class="a t" id="t67" style="top:1411.5px;line-height:16px;font-size:12px;left:2093px;color:#fff;letter-spacing:-0.147px;">Desktop</span>
<span class="a t" id="t68" style="top:1400.5px;line-height:16px;font-size:14px;left:2143px;font-weight:bold;color:#fff;">»</span>
<svg class="a" style="left:2160px;top:1408px" width="60" height="22" viewBox="0 0 60 22" fill="none" stroke="#fff" stroke-width="1.200"><path d="M3 14 L8.500 8.500 L14 14" stroke-width="1.400"/><rect x="26.500" y="6" width="14" height="9"/><path d="M33.500 15 V18 M29 18.500 H38"/><rect x="25" y="5.500" width="4.500" height="4.500" fill="#101010"/></svg>
<span class="a t" id="t69" style="top:1411.5px;line-height:16px;font-size:12px;left:2212px;color:#fff;transform:scaleX(0.8483);transform-origin:left center;">DEU</span>
<span class="a t" id="t70" style="top:1402.5px;line-height:16px;font-size:12px;left:2273.5px;transform:translateX(-50%);color:#fff;letter-spacing:-0.428px;">11:09</span>
<span class="a t" id="t71" style="top:1420.5px;line-height:16px;font-size:12px;left:2273.5px;transform:translateX(-50%);color:#fff;letter-spacing:-0.606px;">05.01.2026</span>
<svg class="a" style="left:2316px;top:1409px" width="24" height="22" viewBox="0 0 24 22"><path d="M3 3 H19 V15 H15 V19 L11 15 H3 Z" fill="#fff"/><path d="M6 7 H16 M6 10 H16 M6 12.800 H12" stroke="#101010" stroke-width="1"/><circle cx="17" cy="16" r="2.400" fill="#101010" stroke="#fff" stroke-width="0.800"/></svg>
<div class="a" style="left:2355px;top:1400px;width:1px;height:40px;background:#4a4a4a;"></div>
<div class="a" style="left:507px;top:407px;width:1688px;height:894px;box-shadow:0 0 3px rgba(0,0,0,0.12);"></div>
<div class="a" style="left:508px;top:408px;width:1684px;height:891px;background:#f0f0f0;border:1px solid #1a7ad0;"></div>
<div class="a" style="left:509px;top:409px;width:1684px;height:30px;background:#fff;"></div>
<svg class="a" style="left:517px;top:417px" width="16" height="12.5" viewBox="0 0 24.2 18.5" preserveAspectRatio="none"><rect x="0" y="0" width="24.2" height="18.5" rx="4.5" fill="#2596cf"/><path d="M4.5 0 H3 Q0 2 0 9.2 Q0 16.500 3 18.500 H4.500 Q2.500 14 2.500 9.200 Q2.500 4 4.500 0 Z" fill="#1579b0"/><rect x="6.1" y="3.2" width="15.7" height="13" rx="0.8" fill="#fff"/><path d="M9.6 3.2 H13.4 Q15.3 8 20 9.7 Q15.3 11.4 13.2 16.2 H9.1 Q11.4 11.4 15.5 9.7 Q11.6 8 9.6 3.2 Z" fill="#2596cf"/></svg>
<span class="a t" id="t72" style="top:416px;line-height:16px;font-size:12px;left:538px;color:#000;letter-spacing:0.255px;">Angebot -&gt; Auftrag</span>
<svg class="a" style="left:2060px;top:409px" width="130" height="30" viewBox="0 0 130 30" fill="none" stroke="#111" stroke-width="1.100"><path d="M13.500 14.500 H24"/><rect x="59.500" y="9.500" width="9" height="9"/><path d="M104.500 9 L114.500 19 M114.500 9 L104.500 19"/></svg>
<div class="a" style="left:510px;top:439px;width:1682px;height:21px;background:#d0d0d0;border-radius:4px 4px 0 0;border-top:1px solid #b4b4b4;height:20px;"></div>
<span class="a t" id="t73" style="top:442px;line-height:16px;font-size:12px;left:521px;font-weight:bold;color:#111;letter-spacing:-0.070px;">Auftragsbestätigung erstellen</span>
<div class="a" style="left:510px;top:460px;width:1682px;height:24px;background:#e9e9e9;"></div>
<div class="a" style="left:512px;top:462px;width:200px;height:137px;background:#bebfd0;"></div>
<div class="a" style="left:712px;top:462px;width:450px;height:137px;background:#f0f1f3;"></div>
<div class="a" style="left:512px;top:462px;width:650px;height:1px;background:#8d8d92;"></div>
<div class="a" style="left:712px;top:462px;width:450px;height:1px;background:#666;"></div>
<div class="a" style="left:712px;top:462px;width:1px;height:137px;background:#666;"></div>
<div class="a" style="left:1161px;top:462px;width:1px;height:137px;background:#999;"></div>
<div class="a" style="left:512px;top:598px;width:650px;height:1px;background:#8a8a8a;"></div>
<div class="a" style="left:510px;top:599px;width:1682px;height:3px;background:#ececec;"></div>
<span class="a t" id="t74" style="top:487px;line-height:18px;font-size:14.2px;right:1662.5px;font-weight:bold;color:#111;transform:scaleX(0.8904);transform-origin:right center;">Auftrags-Nr.</span>
<span class="a t" id="t75" style="top:518.7px;line-height:18px;font-size:14.2px;right:1662px;font-weight:bold;color:#111;transform:scaleX(0.9242);transform-origin:right center;">Interessent wird Kunde</span>
<span class="a t" id="t76" style="top:550.7px;line-height:18px;font-size:14.2px;right:1662.5px;font-weight:bold;color:#111;transform:scaleX(0.9174);transform-origin:right center;">Bestell-Nr. Kunde</span>
<div class="a f" style="left:718px;top:486px;width:31px;height:19px;background:#fff;border:1px solid #c4c4c4;line-height:19px;font-size:12px;color:#9a9a9a;"><span class="a" style="left:2px;top:1px;">E</span></div>
<svg class="a" style="left:737px;top:494px" width="10" height="7" viewBox="0 0 10 7"><path d="M1 1 L5 5.500 L9 1" fill="none" stroke="#aaa" stroke-width="1.100"/></svg>
<div class="a f" style="left:753px;top:487px;width:180px;height:17px;background:#ebebed;border:1px solid #bcc0c8;line-height:17px;font-size:12px;"><span class="a" style="left:1px;top:1px;">AG26-00101</span></div>
<div class="a b bd" style="left:942px;top:486px;width:128px;height:19px;line-height:17px;font-size:10.67px;"><span>Neue Nr. (F8)</span></div>
<div class="a f" style="left:719px;top:519px;width:139px;height:17px;background:#ebebed;border:1px solid #bcc0c8;line-height:17px;font-size:12px;"><span class="a" style="left:1px;top:1px;">11005</span></div>
<div class="a b bd" style="left:942px;top:518px;width:128px;height:19px;line-height:17px;font-size:10.67px;"><span>Neue Kundennummer</span></div>
<div class="a f" style="left:719px;top:551px;width:223px;height:17px;background:#fff;border:1px solid #bcc0c8;line-height:17px;font-size:12px;"></div>
<div class="a" style="left:1162px;top:462px;width:107px;height:22px;background:#fff;"></div>
<div class="a" style="left:1269px;top:463px;width:81px;height:20px;background:#f3f3f3;border:1px solid #dfdfdf;"></div>
<div class="a" style="left:1351px;top:463px;width:99px;height:20px;background:#f3f3f3;border:1px solid #dfdfdf;"></div>
<svg class="a" style="left:1171px;top:466px" width="15" height="13" viewBox="0 0 15 13"><path d="M1 6.500 L3.500 5 L6 8 L12.500 0.800 L14.500 2.500 L6.200 12 Z" fill="#35a82f" stroke="#1f7a1c" stroke-width="0.7"/><path d="M2.300 6.500 L3.400 5.900 L6 9 L12.600 1.800" fill="none" stroke="#8be37a" stroke-width="1"/></svg>
<span class="a t" id="t77" style="top:466.5px;line-height:16px;font-size:12px;left:1193px;font-weight:bold;letter-spacing:-0.070px;"><u>1</u> Dokument</span>
<i class="a" style="left:1280px;top:471px;width:0;height:0;border-top:3.500px solid transparent;border-bottom:3.500px solid transparent;border-left:6px solid #777"></i>
<span class="a t" id="t78" style="top:466.5px;line-height:16px;font-size:12px;left:1297px;letter-spacing:0.069px;"><u>2</u> Projekt</span>
<i class="a" style="left:1364px;top:471px;width:0;height:0;border-top:3.500px solid transparent;border-bottom:3.500px solid transparent;border-left:6px solid #777"></i>
<span class="a t" id="t79" style="top:466.5px;line-height:16px;font-size:12px;left:1381px;letter-spacing:0.206px;"><u>3</u> Sonstiges</span>
<div class="a" style="left:1162px;top:484px;width:200px;height:115px;background:#bebfd0;"></div>
<div class="a" style="left:1362px;top:484px;width:828px;height:115px;background:#f0f1f3;"></div>
<div class="a" style="left:1362px;top:484px;width:828px;height:1px;background:#666;"></div>
<div class="a" style="left:1362px;top:484px;width:1px;height:115px;background:#666;"></div>
<div class="a" style="left:1162px;top:598px;width:1028px;height:1px;background:#8a8a8a;"></div>
<div class="a" style="left:2189px;top:484px;width:1px;height:115px;background:#999;"></div>
<span class="a t" id="t80" style="top:495px;line-height:18px;font-size:14.2px;right:1011.5px;font-weight:bold;color:#111;transform:scaleX(0.9225);transform-origin:right center;">Dokument</span>
<span class="a t" id="t81" style="top:519px;line-height:18px;font-size:14.2px;right:1011.5px;font-weight:bold;color:#111;transform:scaleX(0.9293);transform-origin:right center;">Gesamtrabatt</span>
<span class="a t" id="t82" style="top:570px;line-height:18px;font-size:14.2px;right:1012px;font-weight:bold;color:#111;transform:scaleX(0.9260);transform-origin:right center;">Ansprechpartner Intern</span>
<div class="a f" style="left:1373px;top:495px;width:117px;height:17px;background:#ffffe1;border:1px solid #bcc0c8;line-height:17px;font-size:12px;"><span class="a" style="right:1px;top:1px;letter-spacing:0.300px;">312600100</span></div>
<div class="a f" style="left:1373px;top:519px;width:67px;height:17px;background:#ffffe1;border:1px solid #bcc0c8;line-height:17px;font-size:12px;"><span class="a" style="right:1px;top:1px;">0,00 %</span></div>
<div class="a" style="left:1374px;top:547px;width:11px;height:11px;background:#fff;border:1px solid #333;"></div>
<span class="a t" id="t83" style="top:545.5px;line-height:16px;font-size:12px;left:1390px;font-weight:bold;letter-spacing:-0.208px;">Zahlungsplan</span>
<div class="a f" style="left:1373px;top:570px;width:117px;height:17px;background:#fff;border:1px solid #bcc0c8;line-height:17px;font-size:12px;"><span class="a" style="left:1px;top:1px;">STA</span><i class="d" style="right:4px;top:8px"></i></div>
<span class="a t" id="t84" style="top:490px;line-height:16px;font-size:10.67px;left:1530px;letter-spacing:0.250px;">Anschreiben</span>
<div class="a" style="left:1530px;top:508px;width:159px;height:39px;background:#fff;border:1px solid #7a7a7a;"></div>
<span class="a t" id="t85" style="top:510px;line-height:16px;font-size:10.67px;left:1533px;letter-spacing:0.196px;">Vorgabetext Anschreiben</span>
<span class="a t" id="t86" style="top:524px;line-height:16px;font-size:10.67px;left:1533px;letter-spacing:0.105px;">Angebot aus</span>
<div class="a" style="left:1672px;top:510px;width:16px;height:37px;background:#f0f0f0;"></div>
<svg class="a" style="left:1672px;top:510px" width="16" height="37" viewBox="0 0 16 37" fill="none" stroke="#404040" stroke-width="1.300"><path d="M4.500 10.500 L8 7 L11.500 10.500"/><path d="M4.500 26.500 L8 30 L11.500 26.500"/></svg>
<span class="a t" id="t87" style="top:490px;line-height:16px;font-size:10.67px;left:1714px;letter-spacing:0.227px;">Schlusstext</span>
<div class="a" style="left:1714px;top:508px;width:159px;height:39px;background:#fff;border:1px solid #7a7a7a;"></div>
<span class="a t" id="t88" style="top:510px;line-height:16px;font-size:10.67px;left:1717px;letter-spacing:0.160px;">Vorgabetext Fußtext</span>
<span class="a t" id="t89" style="top:524px;line-height:16px;font-size:10.67px;left:1717px;letter-spacing:0.105px;">Angebot aus</span>
<div class="a" style="left:1856px;top:510px;width:16px;height:37px;background:#f0f0f0;"></div>
<svg class="a" style="left:1856px;top:510px" width="16" height="37" viewBox="0 0 16 37" fill="none" stroke="#404040" stroke-width="1.300"><path d="M4.500 10.500 L8 7 L11.500 10.500"/><path d="M4.500 26.500 L8 30 L11.500 26.500"/></svg>
<div class="a" style="left:1532px;top:573px;width:11px;height:11px;background:#fff;border:1px solid #333;"><svg class="a" style="left:0;top:0" width="11" height="11" viewBox="0 0 11 11"><path d="M1.5 5.5 L4.2 8.3 L9.5 2" fill="none" stroke="#222" stroke-width="1.3"/></svg></div>
<span class="a t" id="t90" style="top:572px;line-height:16px;font-size:12px;left:1548px;letter-spacing:0.149px;">Angebotstext in Auftragsbestätigung übernehmen, wenn abweichend</span>
<div class="a" style="left:510px;top:602px;width:648px;height:21px;background:#d0d0d0;border-radius:4px 4px 0 0;border-top:1px solid #b4b4b4;height:20px;"></div>
<span class="a t" id="t91" style="top:605px;line-height:16px;font-size:12px;left:521px;font-weight:bold;color:#111;letter-spacing:-0.096px;">Auftrag</span>
<div class="a" style="left:512px;top:625px;width:642px;height:630px;background:#fff;border:1px solid #84888e;"></div>
<div class="a" style="left:1156px;top:626px;width:3px;height:632px;background:#dcdcdc;"></div>
<div class="a" style="left:513px;top:636px;width:12px;height:21px;background:#d6e7f7;"></div>
<svg class="a" style="left:515px;top:642px" width="8" height="10" viewBox="0 0 8 10" stroke="#222" stroke-width="1"><path d="M1 1.500 H7 M1 3.500 H7 M1 5.500 H7 M1 7.500 H7 M1 9.500 H7" stroke-dasharray="1.500 1 6 0"/></svg>
<div class="a" style="left:654px;top:636px;width:1px;height:21px;background:#e0e0e0;"></div>
<div class="a" style="left:874px;top:636px;width:1px;height:21px;background:#e0e0e0;"></div>
<div class="a" style="left:964px;top:636px;width:1px;height:21px;background:#e0e0e0;"></div>
<div class="a" style="left:1054px;top:636px;width:1px;height:21px;background:#e0e0e0;"></div>
<span class="a t" id="t92" style="top:639px;line-height:16px;font-size:12px;left:525px;letter-spacing:0.033px;">rtikel-Nr.</span>
<span class="a t" id="t93" style="top:639px;line-height:16px;font-size:12px;left:658px;letter-spacing:0.089px;">Artikelbezeichnung</span>
<span class="a t" id="t94" style="top:639px;line-height:16px;font-size:12px;left:878px;letter-spacing:0.164px;">Dokument-Nr.</span>
<span class="a t" id="t95" style="top:639px;line-height:16px;font-size:12px;left:968px;letter-spacing:-0.142px;">Wert P (Verka...</span>
<span class="a t" id="t96" style="top:639px;line-height:16px;font-size:12px;left:1058px;letter-spacing:0.131px;">DBRID</span>
<div class="a" style="left:525px;top:657px;width:630px;height:19px;background:#0078d7;border-top:1px dotted #ff9a3c;border-bottom:1px dotted #ff9a3c;height:17px;"></div>
<div class="a" style="left:654px;top:657px;width:1px;height:19px;background:#f0b27a;"></div>
<div class="a" style="left:874px;top:657px;width:1px;height:19px;background:#f0b27a;"></div>
<div class="a" style="left:964px;top:657px;width:1px;height:19px;background:#f0b27a;"></div>
<div class="a" style="left:1054px;top:657px;width:1px;height:19px;background:#f0b27a;"></div>
<svg class="a" style="left:516px;top:662px" width="7" height="9" viewBox="0 0 7 9"><path d="M1 1 L5.500 4.500 L1 8 Z" fill="#fff" stroke="#111" stroke-width="1"/></svg>
<span class="a t" id="t97" style="top:659px;line-height:16px;font-size:12px;left:524px;color:#fff;letter-spacing:0.133px;">/.13.N-272.371 /C</span>
<span class="a t" id="t98" style="top:658.5px;line-height:16px;font-size:10.67px;left:657px;color:#fff;letter-spacing:0.087px;">Welle Nut   ||11685343456</span>
<span class="a t" id="t99" style="top:659px;line-height:16px;font-size:12px;right:1398px;color:#fff;letter-spacing:0.214px;">332600100</span>
<span class="a t" id="t100" style="top:659px;line-height:16px;font-size:12px;right:1308px;color:#fff;letter-spacing:0.167px;">11.956,70</span>
<span class="a t" id="t101" style="top:659px;line-height:16px;font-size:12px;left:1057px;color:#fff;letter-spacing:0.159px;">485753</span>
<div class="a" style="left:513px;top:1214px;width:642px;height:25px;background:#f0f0f0;"></div>
<div class="a" style="left:513px;top:1214px;width:642px;height:1px;background:#d4d4d4;"></div>
<div class="a" style="left:513px;top:1238px;width:642px;height:1px;background:#bcbcbc;"></div>
<div class="a" style="left:524px;top:1215px;width:1px;height:23px;background:#cfcfcf;"></div>
<div class="a" style="left:966px;top:1217px;width:87px;height:19px;background:#f0f0f0;box-shadow:inset 1px 1px 0 #9a9a9a, inset -1px -1px 0 #fff;"></div>
<span class="a t" id="t102" style="top:1219px;line-height:16px;font-size:12px;right:1309px;letter-spacing:0.104px;">11956,70</span>
<div class="a" style="left:513px;top:1239px;width:642px;height:17px;background:#f0f0f0;"></div>
<div class="a" style="left:653px;top:1240px;width:485px;height:15px;background:#cdcdcd;"></div>
<svg class="a" style="left:513px;top:1239px" width="642" height="17" viewBox="0 0 642 17" fill="none" stroke="#404040" stroke-width="1.900"><path d="M9.500 5 L6 8.500 L9.500 12"/><path d="M632.5 5 L636 8.500 L632.5 12"/></svg>
<div class="a" style="left:1159px;top:603px;width:4px;height:656px;background:#e2e2e2;"></div>
<div class="a" style="left:1160px;top:603px;width:1px;height:656px;background:#fafafa;"></div>
<div class="a" style="left:1163px;top:603px;width:116px;height:656px;background:#f0f0f0;"></div>
<div class="a" style="left:1159px;top:921px;width:3px;height:20px;background:repeating-linear-gradient(#888 0 1px,transparent 1px 3px)"></div>
<div class="a b" style="left:1164px;top:651px;width:109px;height:22px;line-height:20px;font-size:10.67px;"><svg width="16" height="13" viewBox="0 0 16 13"><path d="M1 6.500 L7.500 0.800 V4 H15 V9 H7.500 V12.200 Z" fill="#3b8fe0" stroke="#1a5fb0" stroke-width="0.800"/><path d="M3 6.200 L7 3 V5 H14" fill="none" stroke="#a8d2ff" stroke-width="0.900"/></svg><span>Übernehmen</span></div>
<div class="a b" style="left:1164px;top:676px;width:109px;height:22px;line-height:20px;font-size:10.67px;"><svg width="16" height="13" viewBox="0 0 16 13"><path d="M1 6.500 L7.500 0.800 V4 H15 V9 H7.500 V12.200 Z" fill="#3b8fe0" stroke="#1a5fb0" stroke-width="0.800"/><path d="M3 6.200 L7 3 V5 H14" fill="none" stroke="#a8d2ff" stroke-width="0.900"/></svg><span>Alle Übernehmen</span></div>
<div class="a b" style="left:1163px;top:716px;width:109px;height:23px;line-height:21px;font-size:10.67px;"><svg width="16" height="13" viewBox="0 0 16 13"><path d="M15 6.500 L8.500 0.800 V4 H1 V9 H8.500 V12.200 Z" fill="#3b8fe0" stroke="#1a5fb0" stroke-width="0.800"/><path d="M2 5 H9 V3 L13 6.200" fill="none" stroke="#a8d2ff" stroke-width="0.900"/></svg><span>Entfernen</span></div>
<div class="a b" style="left:1163px;top:772px;width:109px;height:23px;line-height:21px;font-size:10.67px;"><svg width="17" height="15" viewBox="0 0 17 15"><path d="M1.500 1.500 L8 6.500" stroke="#8a5a1c" stroke-width="2"/><path d="M6 6 L10 4 L16 10 L9 14.500 L5 10 Z" fill="#f4c430" stroke="#b98a12" stroke-width="0.700"/><path d="M6 6 L10 4 L11 5.500 L7 8 Z" fill="#d96b1a"/></svg><span>Rückgängig</span></div>
<div class="a" style="left:1279px;top:602px;width:913px;height:21px;background:#d0d0d0;border-radius:4px 4px 0 0;border-top:1px solid #b4b4b4;height:20px;"></div>
<span class="a t" id="t103" style="top:604.5px;line-height:16px;font-size:12px;left:1290px;font-weight:bold;color:#111;letter-spacing:-0.237px;">Angebot</span>
<div class="a" style="left:1281px;top:625px;width:907px;height:630px;background:#fff;border:1px solid #84888e;"></div>
<svg class="a" style="left:1284px;top:642px" width="8" height="10" viewBox="0 0 8 10" stroke="#222" stroke-width="1"><path d="M1 1.500 H7 M1 3.500 H7 M1 5.500 H7 M1 7.500 H7 M1 9.500 H7" stroke-dasharray="1.500 1 6 0"/></svg>
<div class="a" style="left:1328px;top:636px;width:1px;height:21px;background:#e0e0e0;"></div>
<div class="a" style="left:1377px;top:636px;width:1px;height:21px;background:#e0e0e0;"></div>
<div class="a" style="left:1476px;top:636px;width:1px;height:21px;background:#e0e0e0;"></div>
<div class="a" style="left:1613px;top:636px;width:1px;height:21px;background:#e0e0e0;"></div>
<div class="a" style="left:1830px;top:636px;width:1px;height:21px;background:#e0e0e0;"></div>
<div class="a" style="left:1904px;top:636px;width:1px;height:21px;background:#e0e0e0;"></div>
<div class="a" style="left:1978px;top:636px;width:1px;height:21px;background:#e0e0e0;"></div>
<div class="a" style="left:2027px;top:636px;width:1px;height:21px;background:#e0e0e0;"></div>
<div class="a" style="left:2115px;top:636px;width:1px;height:21px;background:#e0e0e0;"></div>
<div class="a" style="left:2165px;top:636px;width:1px;height:21px;background:#e0e0e0;"></div>
<span class="a t" id="t104" style="top:639px;line-height:16px;font-size:12px;left:1297px;letter-spacing:0.052px;">Ide...</span>
<span class="a t" id="t105" style="top:639px;line-height:16px;font-size:12px;left:1332px;letter-spacing:-0.038px;">Pos. (...</span>
<span class="a t" id="t106" style="top:639px;line-height:16px;font-size:12px;left:1381px;letter-spacing:0.053px;">Bestell-Nr. Kun...</span>
<span class="a t" id="t107" style="top:639px;line-height:16px;font-size:12px;left:1480px;letter-spacing:-0.061px;">Artikel-Nr.</span>
<span class="a t" id="t108" style="top:639px;line-height:16px;font-size:12px;left:1617px;letter-spacing:0.089px;">Artikelbezeichnung</span>
<span class="a t" id="t109" style="top:639px;line-height:16px;font-size:12px;left:1834px;letter-spacing:-0.171px;">Menge ver...</span>
<span class="a t" id="t110" style="top:639px;line-height:16px;font-size:12px;left:1908px;letter-spacing:-0.049px;">Preis (Verk...</span>
<span class="a t" id="t111" style="top:639px;line-height:16px;font-size:12px;left:1982px;letter-spacing:-0.004px;">Rabat...</span>
<span class="a t" id="t112" style="top:639px;line-height:16px;font-size:12px;left:2031px;letter-spacing:-0.142px;">Wert P (Verka...</span>
<span class="a t" id="t113" style="top:639px;line-height:16px;font-size:12px;left:2119px;letter-spacing:-0.002px;">Gesc...</span>
<div class="a" style="left:1293px;top:657px;width:895px;height:19px;background:#efefef;"></div>
<div class="a" style="left:1293px;top:676px;width:895px;height:1px;background:#dcdcdc;"></div>
<div class="a" style="left:1830px;top:657px;width:74px;height:19px;background:#fff;"></div>
<div class="a" style="left:2116px;top:657px;width:49px;height:19px;background:#86cf80;"></div>
<div class="a" style="left:1293px;top:657px;width:1px;height:19px;background:#dcdcdc;"></div>
<div class="a" style="left:1328px;top:657px;width:1px;height:19px;background:#dcdcdc;"></div>
<div class="a" style="left:1377px;top:657px;width:1px;height:19px;background:#dcdcdc;"></div>
<div class="a" style="left:1476px;top:657px;width:1px;height:19px;background:#dcdcdc;"></div>
<div class="a" style="left:1613px;top:657px;width:1px;height:19px;background:#dcdcdc;"></div>
<div class="a" style="left:1830px;top:657px;width:1px;height:19px;background:#dcdcdc;"></div>
<div class="a" style="left:1904px;top:657px;width:1px;height:19px;background:#dcdcdc;"></div>
<div class="a" style="left:1978px;top:657px;width:1px;height:19px;background:#dcdcdc;"></div>
<div class="a" style="left:2027px;top:657px;width:1px;height:19px;background:#dcdcdc;"></div>
<div class="a" style="left:2115px;top:657px;width:1px;height:19px;background:#dcdcdc;"></div>
<div class="a" style="left:2165px;top:657px;width:1px;height:19px;background:#dcdcdc;"></div>
<div class="a" style="left:1294px;top:657px;width:16px;height:19px;background:#fff;"></div>
<svg class="a" style="left:1285px;top:662px" width="7" height="9" viewBox="0 0 7 9"><path d="M1 1 L5.500 4.500 L1 8 Z" fill="#fff" stroke="#111" stroke-width="1"/></svg>
<i class="d" style="left:1301px;top:666px;width:7px;background:repeating-linear-gradient(90deg,#c4c4c4 0 1px,transparent 1px 2px)"></i>
<span class="a t" id="t114" style="top:659px;line-height:16px;font-size:12px;right:1034.5px;letter-spacing:-0.180px;">21</span>
<span class="a t" id="t115" style="top:659px;line-height:16px;font-size:12px;right:985px;letter-spacing:-0.180px;">10</span>
<span class="a t" id="t116" style="top:659px;line-height:16px;font-size:12px;left:1479px;letter-spacing:0.114px;">W.13.N-272.371 /C</span>
<span class="a t" id="t117" style="top:658.5px;line-height:16px;font-size:10.67px;left:1616px;letter-spacing:-0.111px;">Welle Nut</span>
<span class="a t" id="t118" style="top:659px;line-height:16px;font-size:12px;right:458px;letter-spacing:-0.180px;">10</span>
<span class="a t" id="t119" style="top:659px;line-height:16px;font-size:12px;right:384px;letter-spacing:0.035px;">1.195,67</span>
<span class="a t" id="t120" style="top:659px;line-height:16px;font-size:12px;right:335px;letter-spacing:-0.060px;">0,00 %</span>
<span class="a t" id="t121" style="top:659px;line-height:16px;font-size:12px;right:247px;font-style:italic;color:#8a8a8a;letter-spacing:0.167px;">11.956,70</span>
<div class="a" style="left:2134px;top:660px;width:11px;height:11px;background:#fff;border:1px solid #333;"><svg class="a" style="left:0;top:0" width="11" height="11" viewBox="0 0 11 11"><path d="M1.5 5.5 L4.2 8.3 L9.5 2" fill="none" stroke="#222" stroke-width="1.3"/></svg></div>
<div class="a" style="left:2166px;top:636px;width:22px;height:40px;overflow:hidden;font-size:12px;line-height:16px"><span class="a" style="left:3px;top:3px">Artikel</span><span class="a" style="left:2px;top:23px">E • A</span></div>
<div class="a" style="left:2188px;top:626px;width:4px;height:632px;background:#f0f0f0;"></div>
<div class="a" style="left:2188px;top:626px;width:1px;height:631px;background:#8a8a8a;"></div>
<div class="a" style="left:2190px;top:603px;width:2px;height:656px;background:#dcdcdc;"></div>
<div class="a" style="left:1282px;top:1214px;width:906px;height:25px;background:#f0f0f0;"></div>
<div class="a" style="left:1282px;top:1214px;width:906px;height:1px;background:#d4d4d4;"></div>
<div class="a" style="left:1282px;top:1238px;width:906px;height:1px;background:#bcbcbc;"></div>
<div class="a" style="left:1293px;top:1215px;width:1px;height:23px;background:#cfcfcf;"></div>
<div class="a" style="left:2029px;top:1217px;width:86px;height:19px;background:#f0f0f0;box-shadow:inset 1px 1px 0 #9a9a9a, inset -1px -1px 0 #fff;"></div>
<span class="a t" id="t122" style="top:1219px;line-height:16px;font-size:12px;right:248px;letter-spacing:0.104px;">11956,70</span>
<div class="a" style="left:1282px;top:1239px;width:906px;height:17px;background:#f0f0f0;"></div>
<div class="a" style="left:1299px;top:1240px;width:806px;height:15px;background:#cdcdcd;"></div>
<svg class="a" style="left:1282px;top:1239px" width="906" height="17" viewBox="0 0 906 17" fill="none" stroke="#404040" stroke-width="1.900"><path d="M9.500 5 L6 8.500 L9.500 12"/><path d="M896.5 5 L900 8.500 L896.5 12"/></svg>
<div class="a" style="left:509px;top:1259px;width:1683px;height:2px;background:#e4e4e4;"></div>
<div class="a b bg" style="left:509px;top:1260px;width:128px;height:38px;line-height:36px;font-size:11.3px;"><svg width="17" height="15" viewBox="0 0 17 15"><path d="M1 7.500 L4 5.500 L6.500 9 L14 0.800 L16.500 3 L7 14 Z" fill="#3fae36" stroke="#1f7a1c" stroke-width="0.700"/></svg><span><u>O</u>k</span></div>
<div class="a b bg" style="left:639px;top:1260px;width:128px;height:38px;line-height:36px;font-size:11.3px;"><svg width="16" height="16" viewBox="0 0 16 16"><path d="M2 4 L4.500 1.500 L8 5 L11.500 1.500 L14 4 L10.500 8 L14 12 L11.500 14.500 L8 11 L4.500 14.500 L2 12 L5.500 8 Z" fill="#e8452c" stroke="#a82614" stroke-width="0.700"/></svg><span><u>A</u>bbrechen</span></div>
<div class="a" style="left:779px;top:1264px;width:11px;height:11px;background:#fff;border:1px solid #333;"><svg class="a" style="left:0;top:0" width="11" height="11" viewBox="0 0 11 11"><path d="M1.5 5.5 L4.2 8.3 L9.5 2" fill="none" stroke="#222" stroke-width="1.3"/></svg></div>
<span class="a t" id="t123" style="top:1262.5px;line-height:16px;font-size:12px;left:795px;letter-spacing:0.286px;">Nicht übernommene Positionen schließen</span>
<div class="a" style="left:778px;top:1282px;width:11px;height:11px;background:#fff;border:1px solid #333;"></div>
<span class="a t" id="t124" style="top:1280.5px;line-height:16px;font-size:12px;left:794px;letter-spacing:0.253px;">Nicht übernommene Positionen stornieren</span>
</body></html>
